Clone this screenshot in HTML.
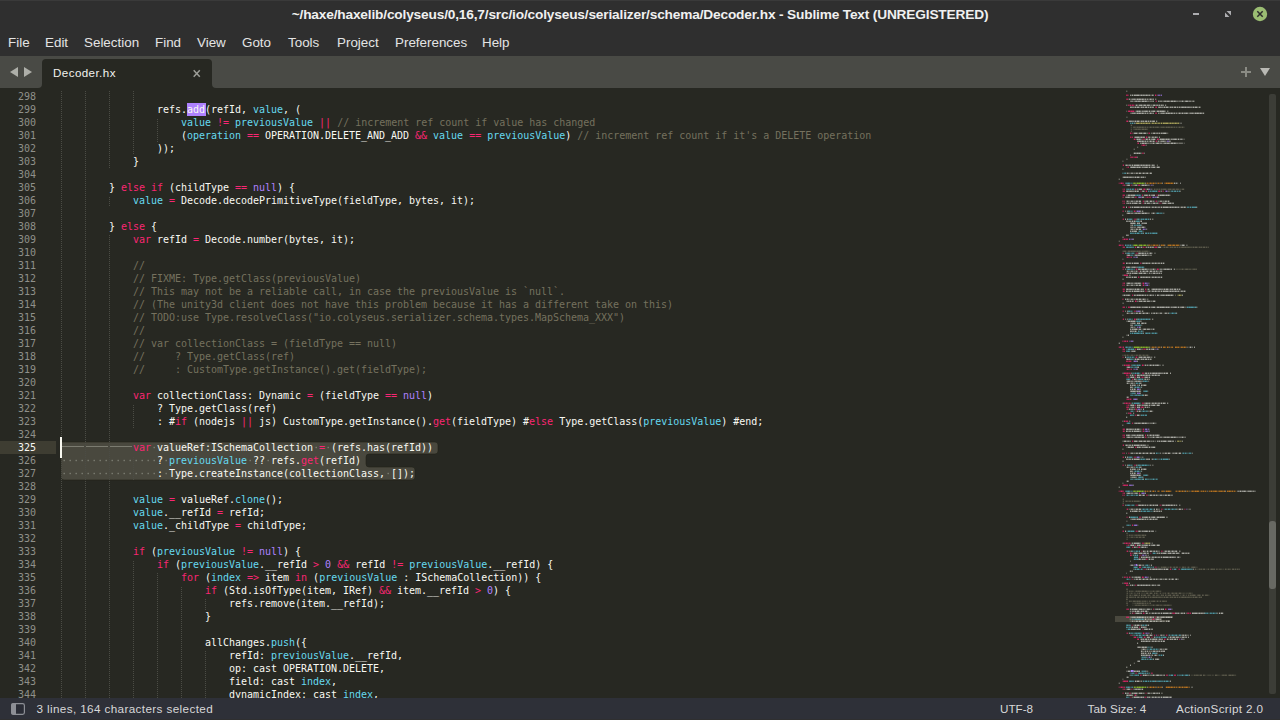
<!DOCTYPE html>
<html lang="en">
<head>
<meta charset="utf-8">
<title>Decoder.hx - Sublime Text (UNREGISTERED)</title>
<style>
html,body{margin:0;padding:0;background:#272822;}
body{width:1280px;height:720px;position:relative;overflow:hidden;font-family:"Liberation Sans","DejaVu Sans",sans-serif;}
#titlebar{position:absolute;left:0;top:0;width:1280px;height:56px;background:#2f2f2f;}
#topedge{position:absolute;left:0;top:0;width:1280px;height:1px;background:#3a3a3a;}
#title{position:absolute;left:0;top:6px;width:1280px;text-align:center;font-weight:bold;font-size:13.7px;letter-spacing:-0.17px;line-height:18px;color:#f0f0f0;white-space:pre;}
.menu{position:absolute;top:34px;font-size:13.4px;line-height:18px;color:#e4e4e4;white-space:pre;}
#tabbar{position:absolute;left:0;top:56px;width:1280px;height:32px;background:#494a45;}
#tab{position:absolute;left:42px;top:59px;width:170px;height:29px;background:#272822;border-radius:4px 4px 0 0;}
#tabname{position:absolute;left:53px;top:64px;font-size:11.6px;letter-spacing:0.42px;line-height:18px;color:#f2f2ee;white-space:pre;}
#editor{position:absolute;left:0;top:88px;width:1280px;height:610px;background:#272822;overflow:hidden;}
#status{position:absolute;left:0;top:698px;width:1280px;height:22px;background:#2e3038;}
.st{position:absolute;top:700px;font-size:11.7px;letter-spacing:0.34px;line-height:18px;color:#d8d8d8;white-space:pre;}
.ln,.cl{position:absolute;font-family:"DejaVu Sans Mono","Liberation Mono",monospace;font-size:10px;line-height:13px;height:13px;white-space:pre;}
.ln{left:0;width:36px;text-align:right;color:#8f908a;}
.ln.cur{color:#f8f8f2;}
.cl{color:#f8f8f2;letter-spacing:-0.02px;}
.k{color:#f92672}.b{color:#66d9ef}.p{color:#ae81ff}.c{color:#75715e}
.hl{color:#f8f8f2}
.g{position:absolute;width:1px;top:91px;height:607px;background-image:linear-gradient(to bottom,#4a4b44 50%,transparent 50%);background-size:1px 2px;}
svg{position:absolute;left:0;top:0;}
</style>
</head>
<body>
<div id="titlebar"></div>
<div id="topedge"></div>
<div id="title">~/haxe/haxelib/colyseus/0,16,7/src/io/colyseus/serializer/schema/Decoder.hx - Sublime Text (UNREGISTERED)</div>
<div class="menu" style="left:8px">File</div>
<div class="menu" style="left:45px">Edit</div>
<div class="menu" style="left:84px">Selection</div>
<div class="menu" style="left:155px">Find</div>
<div class="menu" style="left:197px">View</div>
<div class="menu" style="left:242px">Goto</div>
<div class="menu" style="left:288px">Tools</div>
<div class="menu" style="left:337px">Project</div>
<div class="menu" style="left:395px">Preferences</div>
<div class="menu" style="left:482px">Help</div>
<div id="tabbar"></div>
<div id="tab"></div>
<div id="tabname">Decoder.hx</div>
<div id="editor"></div>
<div id="gutterhl" style="position:absolute;left:0;top:441px;width:56px;height:13px;background:#3e3d32"></div>
<div style="position:absolute;left:187px;top:103px;width:19px;height:13px;background:#ae81ff"></div>
<svg width="1280" height="720" viewBox="0 0 1280 720">
<!-- selection -->
<path d="M61 442 H435 Q438 442 438 445 V451 Q438 454 435 454 H369 Q366 454 366 457 V464 Q366 467 369 467 H412 Q415 467 415 470 V477 Q415 480 412 480 H64 Q61 480 61 477 Z" fill="#49483e" stroke="#222319" stroke-opacity="0.6" stroke-width="1"/>
<!-- tab markers line 325 -->
<g stroke="#7b7b70" stroke-width="1" shape-rendering="crispEdges">
<line x1="62" y1="446.5" x2="84" y2="446.5"/><line x1="86" y1="446.5" x2="108" y2="446.5"/><line x1="110" y1="446.5" x2="132" y2="446.5"/>
</g>
<g fill="#7d7e73" id="spdots"><rect x="153.5" y="446.8" width="1.4" height="1.4"/><rect x="315.5" y="446.8" width="1.4" height="1.4"/><rect x="327.5" y="446.8" width="1.4" height="1.4"/><rect x="63.5" y="459.8" width="1.4" height="1.4"/><rect x="69.5" y="459.8" width="1.4" height="1.4"/><rect x="75.5" y="459.8" width="1.4" height="1.4"/><rect x="81.5" y="459.8" width="1.4" height="1.4"/><rect x="87.5" y="459.8" width="1.4" height="1.4"/><rect x="93.5" y="459.8" width="1.4" height="1.4"/><rect x="99.5" y="459.8" width="1.4" height="1.4"/><rect x="105.5" y="459.8" width="1.4" height="1.4"/><rect x="111.5" y="459.8" width="1.4" height="1.4"/><rect x="117.5" y="459.8" width="1.4" height="1.4"/><rect x="123.5" y="459.8" width="1.4" height="1.4"/><rect x="129.5" y="459.8" width="1.4" height="1.4"/><rect x="135.5" y="459.8" width="1.4" height="1.4"/><rect x="141.5" y="459.8" width="1.4" height="1.4"/><rect x="147.5" y="459.8" width="1.4" height="1.4"/><rect x="153.5" y="459.8" width="1.4" height="1.4"/><rect x="165.5" y="459.8" width="1.4" height="1.4"/><rect x="249.5" y="459.8" width="1.4" height="1.4"/><rect x="267.5" y="459.8" width="1.4" height="1.4"/><rect x="63.5" y="472.8" width="1.4" height="1.4"/><rect x="69.5" y="472.8" width="1.4" height="1.4"/><rect x="75.5" y="472.8" width="1.4" height="1.4"/><rect x="81.5" y="472.8" width="1.4" height="1.4"/><rect x="87.5" y="472.8" width="1.4" height="1.4"/><rect x="93.5" y="472.8" width="1.4" height="1.4"/><rect x="99.5" y="472.8" width="1.4" height="1.4"/><rect x="105.5" y="472.8" width="1.4" height="1.4"/><rect x="111.5" y="472.8" width="1.4" height="1.4"/><rect x="117.5" y="472.8" width="1.4" height="1.4"/><rect x="123.5" y="472.8" width="1.4" height="1.4"/><rect x="129.5" y="472.8" width="1.4" height="1.4"/><rect x="135.5" y="472.8" width="1.4" height="1.4"/><rect x="141.5" y="472.8" width="1.4" height="1.4"/><rect x="147.5" y="472.8" width="1.4" height="1.4"/><rect x="153.5" y="472.8" width="1.4" height="1.4"/><rect x="165.5" y="472.8" width="1.4" height="1.4"/><rect x="387.5" y="472.8" width="1.4" height="1.4"/></g>
</svg>
<svg width="1280" height="720" viewBox="0 0 1280 720" shape-rendering="crispEdges"><g stroke="#4b4c45" stroke-width="1" stroke-dasharray="1 1"><line x1="61.5" y1="91" x2="61.5" y2="698"/><line x1="85.5" y1="91" x2="85.5" y2="698"/><line x1="109.5" y1="91" x2="109.5" y2="168"/><line x1="109.5" y1="197" x2="109.5" y2="207"/><line x1="109.5" y1="235" x2="109.5" y2="698"/><line x1="133.5" y1="91" x2="133.5" y2="155"/><line x1="133.5" y1="405" x2="133.5" y2="428"/><line x1="133.5" y1="457" x2="133.5" y2="480"/><line x1="133.5" y1="561" x2="133.5" y2="698"/><line x1="157.5" y1="119" x2="157.5" y2="142"/><line x1="157.5" y1="573" x2="157.5" y2="698"/><line x1="181.5" y1="587" x2="181.5" y2="698"/><line x1="205.5" y1="599" x2="205.5" y2="610"/><line x1="205.5" y1="651" x2="205.5" y2="698"/></g></svg><div class="ln" style="top:90px">298</div>
<div class="ln" style="top:103px">299</div>
<div class="ln" style="top:116px">300</div>
<div class="ln" style="top:129px">301</div>
<div class="ln" style="top:142px">302</div>
<div class="ln" style="top:155px">303</div>
<div class="ln" style="top:168px">304</div>
<div class="ln" style="top:181px">305</div>
<div class="ln" style="top:194px">306</div>
<div class="ln" style="top:207px">307</div>
<div class="ln" style="top:220px">308</div>
<div class="ln" style="top:233px">309</div>
<div class="ln" style="top:246px">310</div>
<div class="ln" style="top:259px">311</div>
<div class="ln" style="top:272px">312</div>
<div class="ln" style="top:285px">313</div>
<div class="ln" style="top:298px">314</div>
<div class="ln" style="top:311px">315</div>
<div class="ln" style="top:324px">316</div>
<div class="ln" style="top:337px">317</div>
<div class="ln" style="top:350px">318</div>
<div class="ln" style="top:363px">319</div>
<div class="ln" style="top:376px">320</div>
<div class="ln" style="top:389px">321</div>
<div class="ln" style="top:402px">322</div>
<div class="ln" style="top:415px">323</div>
<div class="ln" style="top:428px">324</div>
<div class="ln cur" style="top:441px">325</div>
<div class="ln" style="top:454px">326</div>
<div class="ln" style="top:467px">327</div>
<div class="ln" style="top:480px">328</div>
<div class="ln" style="top:493px">329</div>
<div class="ln" style="top:506px">330</div>
<div class="ln" style="top:519px">331</div>
<div class="ln" style="top:532px">332</div>
<div class="ln" style="top:545px">333</div>
<div class="ln" style="top:558px">334</div>
<div class="ln" style="top:571px">335</div>
<div class="ln" style="top:584px">336</div>
<div class="ln" style="top:597px">337</div>
<div class="ln" style="top:610px">338</div>
<div class="ln" style="top:623px">339</div>
<div class="ln" style="top:636px">340</div>
<div class="ln" style="top:649px">341</div>
<div class="ln" style="top:662px">342</div>
<div class="ln" style="top:675px">343</div>
<div class="ln" style="top:688px">344</div>
<div class="cl" style="top:103px;left:157px">refs.<span class="hl">add</span>(refId, <span class="b">value</span>, (</div>
<div class="cl" style="top:116px;left:181px"><span class="b">value</span> <span class="k">!=</span> <span class="b">previousValue</span> <span class="k">||</span> <span class="c">// increment ref count if value has changed</span></div>
<div class="cl" style="top:129px;left:181px">(<span class="b">operation</span> <span class="k">==</span> OPERATION.DELETE_AND_ADD <span class="k">&amp;&amp;</span> <span class="b">value</span> <span class="k">==</span> <span class="b">previousValue</span>) <span class="c">// increment ref count if it's a DELETE operation</span></div>
<div class="cl" style="top:142px;left:157px">));</div>
<div class="cl" style="top:155px;left:133px">}</div>
<div class="cl" style="top:181px;left:109px">} <span class="k">else if</span> (childType <span class="k">==</span> <span class="p">null</span>) {</div>
<div class="cl" style="top:194px;left:133px"><span class="b">value</span> <span class="k">=</span> Decode.decodePrimitiveType(fieldType, bytes, it);</div>
<div class="cl" style="top:220px;left:109px">} <span class="k">else</span> {</div>
<div class="cl" style="top:233px;left:133px"><span class="k">var</span> refId <span class="k">=</span> Decode.number(bytes, it);</div>
<div class="cl" style="top:259px;left:133px"><span class="c">//</span></div>
<div class="cl" style="top:272px;left:133px"><span class="c">// FIXME: Type.getClass(previousValue)</span></div>
<div class="cl" style="top:285px;left:133px"><span class="c">// This may not be a reliable call, in case the previousValue is `null`.</span></div>
<div class="cl" style="top:298px;left:133px"><span class="c">// (The unity3d client does not have this problem because it has a different take on this)</span></div>
<div class="cl" style="top:311px;left:133px"><span class="c">// TODO:use Type.resolveClass("io.colyseus.serializer.schema.types.MapSchema_XXX")</span></div>
<div class="cl" style="top:324px;left:133px"><span class="c">//</span></div>
<div class="cl" style="top:337px;left:133px"><span class="c">// var collectionClass = (fieldType == null)</span></div>
<div class="cl" style="top:350px;left:133px"><span class="c">//     ? Type.getClass(ref)</span></div>
<div class="cl" style="top:363px;left:133px"><span class="c">//     : CustomType.getInstance().get(fieldType);</span></div>
<div class="cl" style="top:389px;left:133px"><span class="k">var</span> collectionClass: Dynamic <span class="k">=</span> (fieldType <span class="k">==</span> <span class="p">null</span>)</div>
<div class="cl" style="top:402px;left:157px">? Type.getClass(ref)</div>
<div class="cl" style="top:415px;left:157px">: #<span class="k">if</span> (nodejs <span class="k">||</span> js) CustomType.getInstance().<span class="k">get</span>(fieldType) #<span class="k">else</span> Type.getClass(<span class="b">previousValue</span>) #end;</div>
<div class="cl" style="top:441px;left:133px"><span class="k">var</span> valueRef:ISchemaCollection <span class="k">=</span> (refs.has(refId))</div>
<div class="cl" style="top:454px;left:157px">? <span class="b">previousValue</span> ?? refs.<span class="k">get</span>(refId)</div>
<div class="cl" style="top:467px;left:157px">: Type.createInstance(collectionClass, []);</div>
<div class="cl" style="top:493px;left:133px"><span class="b">value</span> <span class="k">=</span> valueRef.<span class="b">clone</span>();</div>
<div class="cl" style="top:506px;left:133px"><span class="b">value</span>.__refId <span class="k">=</span> refId;</div>
<div class="cl" style="top:519px;left:133px"><span class="b">value</span>._childType <span class="k">=</span> childType;</div>
<div class="cl" style="top:545px;left:133px"><span class="k">if</span> (<span class="b">previousValue</span> <span class="k">!=</span> <span class="p">null</span>) {</div>
<div class="cl" style="top:558px;left:157px"><span class="k">if</span> (<span class="b">previousValue</span>.__refId <span class="k">&gt;</span> <span class="p">0</span> <span class="k">&amp;&amp;</span> refId <span class="k">!=</span> <span class="b">previousValue</span>.__refId) {</div>
<div class="cl" style="top:571px;left:181px"><span class="k">for</span> (<span class="b">index</span> <span class="k">=&gt;</span> item <span class="k">in</span> (<span class="b">previousValue</span> : ISchemaCollection)) {</div>
<div class="cl" style="top:584px;left:205px"><span class="k">if</span> (Std.isOfType(item, IRef) <span class="k">&amp;&amp;</span> item.__refId <span class="k">&gt;</span> <span class="p">0</span>) {</div>
<div class="cl" style="top:597px;left:229px">refs.remove(item.__refId);</div>
<div class="cl" style="top:610px;left:205px">}</div>
<div class="cl" style="top:636px;left:205px">allChanges.<span class="b">push</span>({</div>
<div class="cl" style="top:649px;left:229px">refId: <span class="b">previousValue</span>.__refId,</div>
<div class="cl" style="top:662px;left:229px">op: cast OPERATION.DELETE,</div>
<div class="cl" style="top:675px;left:229px">field: cast <span class="b">index</span>,</div>
<div class="cl" style="top:688px;left:229px">dynamicIndex: cast <span class="b">index</span>,</div><svg width="1280" height="720" viewBox="0 0 1280 720">
<rect x="1115" y="616" width="58" height="2" fill="#49483e"/><rect x="1115" y="618" width="47" height="2" fill="#49483e"/><rect x="1115" y="620" width="55" height="2" fill="#49483e"/>
<defs><pattern id="tx" x="1115" y="88" width="29" height="14" patternUnits="userSpaceOnUse"><rect x="0" y="0" width="1" height="2" fill="#b2b2b2"/><rect x="1" y="0" width="1" height="2" fill="#8c8c8c"/><rect x="2" y="0" width="1" height="2" fill="#cccccc"/><rect x="3" y="0" width="1" height="2" fill="#ffffff"/><rect x="4" y="0" width="1" height="2" fill="#666666"/><rect x="5" y="0" width="1" height="2" fill="#666666"/><rect x="6" y="0" width="1" height="2" fill="#ffffff"/><rect x="7" y="0" width="1" height="2" fill="#e6e6e6"/><rect x="8" y="0" width="1" height="2" fill="#666666"/><rect x="9" y="0" width="1" height="2" fill="#b2b2b2"/><rect x="10" y="0" width="1" height="2" fill="#e6e6e6"/><rect x="11" y="0" width="1" height="2" fill="#666666"/><rect x="12" y="0" width="1" height="2" fill="#e6e6e6"/><rect x="13" y="0" width="1" height="2" fill="#8c8c8c"/><rect x="14" y="0" width="1" height="2" fill="#666666"/><rect x="15" y="0" width="1" height="2" fill="#666666"/><rect x="16" y="0" width="1" height="2" fill="#cccccc"/><rect x="17" y="0" width="1" height="2" fill="#cccccc"/><rect x="18" y="0" width="1" height="2" fill="#666666"/><rect x="19" y="0" width="1" height="2" fill="#8c8c8c"/><rect x="20" y="0" width="1" height="2" fill="#666666"/><rect x="21" y="0" width="1" height="2" fill="#e6e6e6"/><rect x="22" y="0" width="1" height="2" fill="#cccccc"/><rect x="23" y="0" width="1" height="2" fill="#666666"/><rect x="24" y="0" width="1" height="2" fill="#ffffff"/><rect x="25" y="0" width="1" height="2" fill="#e6e6e6"/><rect x="26" y="0" width="1" height="2" fill="#666666"/><rect x="27" y="0" width="1" height="2" fill="#8c8c8c"/><rect x="28" y="0" width="1" height="2" fill="#ffffff"/><rect x="0" y="2" width="1" height="2" fill="#ffffff"/><rect x="1" y="2" width="1" height="2" fill="#e6e6e6"/><rect x="2" y="2" width="1" height="2" fill="#666666"/><rect x="3" y="2" width="1" height="2" fill="#e6e6e6"/><rect x="4" y="2" width="1" height="2" fill="#e6e6e6"/><rect x="5" y="2" width="1" height="2" fill="#cccccc"/><rect x="6" y="2" width="1" height="2" fill="#666666"/><rect x="7" y="2" width="1" height="2" fill="#8c8c8c"/><rect x="8" y="2" width="1" height="2" fill="#666666"/><rect x="9" y="2" width="1" height="2" fill="#e6e6e6"/><rect x="10" y="2" width="1" height="2" fill="#ffffff"/><rect x="11" y="2" width="1" height="2" fill="#8c8c8c"/><rect x="12" y="2" width="1" height="2" fill="#b2b2b2"/><rect x="13" y="2" width="1" height="2" fill="#cccccc"/><rect x="14" y="2" width="1" height="2" fill="#8c8c8c"/><rect x="15" y="2" width="1" height="2" fill="#e6e6e6"/><rect x="16" y="2" width="1" height="2" fill="#666666"/><rect x="17" y="2" width="1" height="2" fill="#e6e6e6"/><rect x="18" y="2" width="1" height="2" fill="#b2b2b2"/><rect x="19" y="2" width="1" height="2" fill="#e6e6e6"/><rect x="20" y="2" width="1" height="2" fill="#ffffff"/><rect x="21" y="2" width="1" height="2" fill="#ffffff"/><rect x="22" y="2" width="1" height="2" fill="#8c8c8c"/><rect x="23" y="2" width="1" height="2" fill="#666666"/><rect x="24" y="2" width="1" height="2" fill="#e6e6e6"/><rect x="25" y="2" width="1" height="2" fill="#e6e6e6"/><rect x="26" y="2" width="1" height="2" fill="#ffffff"/><rect x="27" y="2" width="1" height="2" fill="#8c8c8c"/><rect x="28" y="2" width="1" height="2" fill="#b2b2b2"/><rect x="0" y="4" width="1" height="2" fill="#666666"/><rect x="1" y="4" width="1" height="2" fill="#e6e6e6"/><rect x="2" y="4" width="1" height="2" fill="#ffffff"/><rect x="3" y="4" width="1" height="2" fill="#666666"/><rect x="4" y="4" width="1" height="2" fill="#e6e6e6"/><rect x="5" y="4" width="1" height="2" fill="#666666"/><rect x="6" y="4" width="1" height="2" fill="#e6e6e6"/><rect x="7" y="4" width="1" height="2" fill="#8c8c8c"/><rect x="8" y="4" width="1" height="2" fill="#cccccc"/><rect x="9" y="4" width="1" height="2" fill="#ffffff"/><rect x="10" y="4" width="1" height="2" fill="#e6e6e6"/><rect x="11" y="4" width="1" height="2" fill="#cccccc"/><rect x="12" y="4" width="1" height="2" fill="#ffffff"/><rect x="13" y="4" width="1" height="2" fill="#b2b2b2"/><rect x="14" y="4" width="1" height="2" fill="#cccccc"/><rect x="15" y="4" width="1" height="2" fill="#e6e6e6"/><rect x="16" y="4" width="1" height="2" fill="#cccccc"/><rect x="17" y="4" width="1" height="2" fill="#b2b2b2"/><rect x="18" y="4" width="1" height="2" fill="#b2b2b2"/><rect x="19" y="4" width="1" height="2" fill="#8c8c8c"/><rect x="20" y="4" width="1" height="2" fill="#ffffff"/><rect x="21" y="4" width="1" height="2" fill="#8c8c8c"/><rect x="22" y="4" width="1" height="2" fill="#ffffff"/><rect x="23" y="4" width="1" height="2" fill="#ffffff"/><rect x="24" y="4" width="1" height="2" fill="#8c8c8c"/><rect x="25" y="4" width="1" height="2" fill="#666666"/><rect x="26" y="4" width="1" height="2" fill="#e6e6e6"/><rect x="27" y="4" width="1" height="2" fill="#b2b2b2"/><rect x="28" y="4" width="1" height="2" fill="#e6e6e6"/><rect x="0" y="6" width="1" height="2" fill="#cccccc"/><rect x="1" y="6" width="1" height="2" fill="#b2b2b2"/><rect x="2" y="6" width="1" height="2" fill="#ffffff"/><rect x="3" y="6" width="1" height="2" fill="#cccccc"/><rect x="4" y="6" width="1" height="2" fill="#b2b2b2"/><rect x="5" y="6" width="1" height="2" fill="#e6e6e6"/><rect x="6" y="6" width="1" height="2" fill="#666666"/><rect x="7" y="6" width="1" height="2" fill="#666666"/><rect x="8" y="6" width="1" height="2" fill="#e6e6e6"/><rect x="9" y="6" width="1" height="2" fill="#cccccc"/><rect x="10" y="6" width="1" height="2" fill="#8c8c8c"/><rect x="11" y="6" width="1" height="2" fill="#ffffff"/><rect x="12" y="6" width="1" height="2" fill="#b2b2b2"/><rect x="13" y="6" width="1" height="2" fill="#8c8c8c"/><rect x="14" y="6" width="1" height="2" fill="#cccccc"/><rect x="15" y="6" width="1" height="2" fill="#cccccc"/><rect x="16" y="6" width="1" height="2" fill="#666666"/><rect x="17" y="6" width="1" height="2" fill="#ffffff"/><rect x="18" y="6" width="1" height="2" fill="#666666"/><rect x="19" y="6" width="1" height="2" fill="#ffffff"/><rect x="20" y="6" width="1" height="2" fill="#e6e6e6"/><rect x="21" y="6" width="1" height="2" fill="#e6e6e6"/><rect x="22" y="6" width="1" height="2" fill="#ffffff"/><rect x="23" y="6" width="1" height="2" fill="#ffffff"/><rect x="24" y="6" width="1" height="2" fill="#b2b2b2"/><rect x="25" y="6" width="1" height="2" fill="#b2b2b2"/><rect x="26" y="6" width="1" height="2" fill="#ffffff"/><rect x="27" y="6" width="1" height="2" fill="#b2b2b2"/><rect x="28" y="6" width="1" height="2" fill="#e6e6e6"/><rect x="0" y="8" width="1" height="2" fill="#cccccc"/><rect x="1" y="8" width="1" height="2" fill="#e6e6e6"/><rect x="2" y="8" width="1" height="2" fill="#ffffff"/><rect x="3" y="8" width="1" height="2" fill="#cccccc"/><rect x="4" y="8" width="1" height="2" fill="#666666"/><rect x="5" y="8" width="1" height="2" fill="#ffffff"/><rect x="6" y="8" width="1" height="2" fill="#666666"/><rect x="7" y="8" width="1" height="2" fill="#b2b2b2"/><rect x="8" y="8" width="1" height="2" fill="#cccccc"/><rect x="9" y="8" width="1" height="2" fill="#ffffff"/><rect x="10" y="8" width="1" height="2" fill="#ffffff"/><rect x="11" y="8" width="1" height="2" fill="#666666"/><rect x="12" y="8" width="1" height="2" fill="#666666"/><rect x="13" y="8" width="1" height="2" fill="#ffffff"/><rect x="14" y="8" width="1" height="2" fill="#ffffff"/><rect x="15" y="8" width="1" height="2" fill="#b2b2b2"/><rect x="16" y="8" width="1" height="2" fill="#ffffff"/><rect x="17" y="8" width="1" height="2" fill="#e6e6e6"/><rect x="18" y="8" width="1" height="2" fill="#ffffff"/><rect x="19" y="8" width="1" height="2" fill="#ffffff"/><rect x="20" y="8" width="1" height="2" fill="#cccccc"/><rect x="21" y="8" width="1" height="2" fill="#b2b2b2"/><rect x="22" y="8" width="1" height="2" fill="#ffffff"/><rect x="23" y="8" width="1" height="2" fill="#cccccc"/><rect x="24" y="8" width="1" height="2" fill="#ffffff"/><rect x="25" y="8" width="1" height="2" fill="#b2b2b2"/><rect x="26" y="8" width="1" height="2" fill="#666666"/><rect x="27" y="8" width="1" height="2" fill="#cccccc"/><rect x="28" y="8" width="1" height="2" fill="#b2b2b2"/><rect x="0" y="10" width="1" height="2" fill="#8c8c8c"/><rect x="1" y="10" width="1" height="2" fill="#e6e6e6"/><rect x="2" y="10" width="1" height="2" fill="#666666"/><rect x="3" y="10" width="1" height="2" fill="#cccccc"/><rect x="4" y="10" width="1" height="2" fill="#666666"/><rect x="5" y="10" width="1" height="2" fill="#8c8c8c"/><rect x="6" y="10" width="1" height="2" fill="#ffffff"/><rect x="7" y="10" width="1" height="2" fill="#b2b2b2"/><rect x="8" y="10" width="1" height="2" fill="#8c8c8c"/><rect x="9" y="10" width="1" height="2" fill="#ffffff"/><rect x="10" y="10" width="1" height="2" fill="#8c8c8c"/><rect x="11" y="10" width="1" height="2" fill="#cccccc"/><rect x="12" y="10" width="1" height="2" fill="#cccccc"/><rect x="13" y="10" width="1" height="2" fill="#ffffff"/><rect x="14" y="10" width="1" height="2" fill="#cccccc"/><rect x="15" y="10" width="1" height="2" fill="#666666"/><rect x="16" y="10" width="1" height="2" fill="#8c8c8c"/><rect x="17" y="10" width="1" height="2" fill="#cccccc"/><rect x="18" y="10" width="1" height="2" fill="#cccccc"/><rect x="19" y="10" width="1" height="2" fill="#e6e6e6"/><rect x="20" y="10" width="1" height="2" fill="#b2b2b2"/><rect x="21" y="10" width="1" height="2" fill="#8c8c8c"/><rect x="22" y="10" width="1" height="2" fill="#ffffff"/><rect x="23" y="10" width="1" height="2" fill="#cccccc"/><rect x="24" y="10" width="1" height="2" fill="#ffffff"/><rect x="25" y="10" width="1" height="2" fill="#e6e6e6"/><rect x="26" y="10" width="1" height="2" fill="#b2b2b2"/><rect x="27" y="10" width="1" height="2" fill="#ffffff"/><rect x="28" y="10" width="1" height="2" fill="#cccccc"/><rect x="0" y="12" width="1" height="2" fill="#b2b2b2"/><rect x="1" y="12" width="1" height="2" fill="#ffffff"/><rect x="2" y="12" width="1" height="2" fill="#cccccc"/><rect x="3" y="12" width="1" height="2" fill="#8c8c8c"/><rect x="4" y="12" width="1" height="2" fill="#8c8c8c"/><rect x="5" y="12" width="1" height="2" fill="#666666"/><rect x="6" y="12" width="1" height="2" fill="#8c8c8c"/><rect x="7" y="12" width="1" height="2" fill="#8c8c8c"/><rect x="8" y="12" width="1" height="2" fill="#8c8c8c"/><rect x="9" y="12" width="1" height="2" fill="#ffffff"/><rect x="10" y="12" width="1" height="2" fill="#8c8c8c"/><rect x="11" y="12" width="1" height="2" fill="#666666"/><rect x="12" y="12" width="1" height="2" fill="#cccccc"/><rect x="13" y="12" width="1" height="2" fill="#ffffff"/><rect x="14" y="12" width="1" height="2" fill="#e6e6e6"/><rect x="15" y="12" width="1" height="2" fill="#8c8c8c"/><rect x="16" y="12" width="1" height="2" fill="#b2b2b2"/><rect x="17" y="12" width="1" height="2" fill="#b2b2b2"/><rect x="18" y="12" width="1" height="2" fill="#666666"/><rect x="19" y="12" width="1" height="2" fill="#8c8c8c"/><rect x="20" y="12" width="1" height="2" fill="#cccccc"/><rect x="21" y="12" width="1" height="2" fill="#e6e6e6"/><rect x="22" y="12" width="1" height="2" fill="#b2b2b2"/><rect x="23" y="12" width="1" height="2" fill="#e6e6e6"/><rect x="24" y="12" width="1" height="2" fill="#e6e6e6"/><rect x="25" y="12" width="1" height="2" fill="#b2b2b2"/><rect x="26" y="12" width="1" height="2" fill="#8c8c8c"/><rect x="27" y="12" width="1" height="2" fill="#ffffff"/><rect x="28" y="12" width="1" height="2" fill="#ffffff"/></pattern><mask id="mk" maskUnits="userSpaceOnUse" x="1100" y="88" width="180" height="612"><rect x="1100" y="88" width="180" height="612" fill="url(#tx)"/></mask></defs>
<g mask="url(#mk)">
<g fill="#f8f8f2" fill-opacity="0.62">
<rect x="1126.25" y="90.55" width="1.0" height="1.45"/>
<rect x="1130.0" y="94.55" width="23.75" height="1.45"/>
<rect x="1128.75" y="98.55" width="25.0" height="1.45"/>
<rect x="1155.25" y="98.55" width="1.0" height="1.45"/>
<rect x="1130.0" y="100.55" width="23.75" height="1.45"/>
<rect x="1158.12" y="100.55" width="36.25" height="1.45"/>
<rect x="1126.25" y="104.55" width="1.0" height="1.45"/>
<rect x="1135.62" y="104.55" width="28.12" height="1.45"/>
<rect x="1165.25" y="104.55" width="1.0" height="1.45"/>
<rect x="1130.0" y="106.55" width="23.75" height="1.45"/>
<rect x="1158.12" y="106.55" width="42.5" height="1.45"/>
<rect x="1126.25" y="110.55" width="1.0" height="1.45"/>
<rect x="1135.62" y="110.55" width="30.0" height="1.45"/>
<rect x="1167.25" y="110.55" width="1.0" height="1.45"/>
<rect x="1130.0" y="112.55" width="23.75" height="1.45"/>
<rect x="1158.12" y="112.55" width="46.25" height="1.45"/>
<rect x="1126.25" y="116.55" width="1.0" height="1.45"/>
<rect x="1128.75" y="120.55" width="26.25" height="1.45"/>
<rect x="1156.25" y="120.55" width="1.0" height="1.45"/>
<rect x="1134.5" y="122.55" width="1.0" height="1.45"/>
<rect x="1179.5" y="122.55" width="2.0" height="1.45"/>
<rect x="1133.5" y="132.55" width="14.0" height="1.45"/>
<rect x="1150.75" y="132.55" width="17.38" height="1.45"/>
<rect x="1134.5" y="136.55" width="10.5" height="1.45"/>
<rect x="1148.0" y="136.55" width="10.12" height="1.45"/>
<rect x="1159.0" y="136.55" width="1.0" height="1.45"/>
<rect x="1136.25" y="138.55" width="6.0" height="1.45"/>
<rect x="1145.5" y="138.55" width="10.75" height="1.45"/>
<rect x="1159.38" y="138.55" width="23.12" height="1.45"/>
<rect x="1183.75" y="138.55" width="1.0" height="1.45"/>
<rect x="1137.25" y="140.55" width="17.75" height="1.45"/>
<rect x="1157.75" y="140.55" width="8.5" height="1.45"/>
<rect x="1169.25" y="140.55" width="1.5" height="1.45"/>
<rect x="1140.0" y="142.55" width="42.5" height="1.45"/>
<rect x="1183.75" y="142.55" width="1.0" height="1.45"/>
<rect x="1145.75" y="144.55" width="0.75" height="1.45"/>
<rect x="1137.25" y="146.55" width="1.0" height="1.45"/>
<rect x="1133.75" y="148.55" width="1.0" height="1.45"/>
<rect x="1133.75" y="152.55" width="8.12" height="1.45"/>
<rect x="1143.88" y="152.55" width="0.75" height="1.45"/>
<rect x="1130.0" y="154.55" width="1.0" height="1.45"/>
<rect x="1137.0" y="156.55" width="0.75" height="1.45"/>
<rect x="1126.25" y="158.55" width="1.0" height="1.45"/>
<rect x="1122.5" y="160.55" width="1.0" height="1.45"/>
<rect x="1125.0" y="164.55" width="30.0" height="1.45"/>
<rect x="1156.88" y="164.55" width="1.0" height="1.45"/>
<rect x="1130.0" y="166.55" width="30.0" height="1.45"/>
<rect x="1122.5" y="168.55" width="1.0" height="1.45"/>
<rect x="1126.38" y="172.55" width="25.5" height="1.45"/>
<rect x="1122.5" y="176.55" width="23.12" height="1.45"/>
<rect x="1118.75" y="178.55" width="1.0" height="1.45"/>
<rect x="1145.12" y="182.55" width="0.75" height="1.45"/>
<rect x="1155.75" y="182.55" width="0.75" height="1.45"/>
<rect x="1162.0" y="182.55" width="0.75" height="1.45"/>
<rect x="1174.0" y="182.55" width="4.12" height="1.45"/>
<rect x="1180.0" y="182.55" width="1.0" height="1.45"/>
<rect x="1125.62" y="184.55" width="4.38" height="1.45"/>
<rect x="1132.5" y="184.55" width="5.0" height="1.45"/>
<rect x="1140.62" y="184.55" width="9.38" height="1.45"/>
<rect x="1152.62" y="184.55" width="0.75" height="1.45"/>
<rect x="1136.88" y="188.55" width="5.0" height="1.45"/>
<rect x="1145.75" y="188.55" width="3.0" height="1.45"/>
<rect x="1151.25" y="188.55" width="1.25" height="1.45"/>
<rect x="1126.0" y="190.55" width="12.75" height="1.45"/>
<rect x="1141.88" y="190.55" width="3.12" height="1.45"/>
<rect x="1160.62" y="190.55" width="1.25" height="1.45"/>
<rect x="1168.12" y="190.55" width="1.88" height="1.45"/>
<rect x="1180.12" y="190.55" width="0.88" height="1.45"/>
<rect x="1126.0" y="194.55" width="9.0" height="1.45"/>
<rect x="1143.75" y="194.55" width="11.25" height="1.45"/>
<rect x="1158.12" y="194.55" width="12.5" height="1.45"/>
<rect x="1125.0" y="196.55" width="9.38" height="1.45"/>
<rect x="1142.12" y="196.55" width="2.25" height="1.45"/>
<rect x="1157.0" y="196.55" width="2.38" height="1.45"/>
<rect x="1126.0" y="200.55" width="15.25" height="1.45"/>
<rect x="1144.38" y="200.55" width="10.0" height="1.45"/>
<rect x="1157.5" y="200.55" width="11.88" height="1.45"/>
<rect x="1126.0" y="202.55" width="15.25" height="1.45"/>
<rect x="1144.38" y="202.55" width="14.38" height="1.45"/>
<rect x="1161.88" y="202.55" width="11.88" height="1.45"/>
<rect x="1126.0" y="206.55" width="1.0" height="1.45"/>
<rect x="1130.0" y="206.55" width="56.25" height="1.45"/>
<rect x="1196.38" y="206.55" width="0.88" height="1.45"/>
<rect x="1125.0" y="210.55" width="1.0" height="1.45"/>
<rect x="1126.88" y="210.55" width="1.0" height="1.45"/>
<rect x="1140.25" y="210.55" width="1.0" height="1.45"/>
<rect x="1142.25" y="210.55" width="1.0" height="1.45"/>
<rect x="1126.25" y="212.55" width="23.75" height="1.45"/>
<rect x="1151.25" y="212.55" width="4.38" height="1.45"/>
<rect x="1163.25" y="212.55" width="1.0" height="1.45"/>
<rect x="1122.5" y="214.55" width="1.0" height="1.45"/>
<rect x="1125.0" y="218.55" width="1.0" height="1.45"/>
<rect x="1126.88" y="218.55" width="1.0" height="1.45"/>
<rect x="1136.25" y="218.55" width="1.25" height="1.45"/>
<rect x="1150.12" y="218.55" width="1.0" height="1.45"/>
<rect x="1152.25" y="218.55" width="1.0" height="1.45"/>
<rect x="1126.25" y="220.55" width="9.38" height="1.45"/>
<rect x="1140.12" y="220.55" width="1.88" height="1.45"/>
<rect x="1130.0" y="222.55" width="5.62" height="1.45"/>
<rect x="1136.88" y="222.55" width="3.12" height="1.45"/>
<rect x="1141.0" y="222.55" width="5.88" height="1.45"/>
<rect x="1130.0" y="224.55" width="3.12" height="1.45"/>
<rect x="1141.38" y="224.55" width="0.75" height="1.45"/>
<rect x="1130.0" y="226.55" width="5.62" height="1.45"/>
<rect x="1136.88" y="226.55" width="7.5" height="1.45"/>
<rect x="1144.5" y="226.55" width="0.75" height="1.45"/>
<rect x="1130.0" y="228.55" width="11.25" height="1.45"/>
<rect x="1146.38" y="228.55" width="0.75" height="1.45"/>
<rect x="1130.0" y="230.55" width="6.88" height="1.45"/>
<rect x="1142.62" y="230.55" width="0.75" height="1.45"/>
<rect x="1143.25" y="232.55" width="0.75" height="1.45"/>
<rect x="1126.25" y="234.55" width="2.75" height="1.45"/>
<rect x="1122.5" y="236.55" width="1.0" height="1.45"/>
<rect x="1133.25" y="238.55" width="0.75" height="1.45"/>
<rect x="1118.75" y="240.55" width="1.0" height="1.45"/>
<rect x="1147.62" y="244.55" width="0.75" height="1.45"/>
<rect x="1158.88" y="244.55" width="0.75" height="1.45"/>
<rect x="1164.5" y="244.55" width="0.75" height="1.45"/>
<rect x="1180.25" y="244.55" width="4.75" height="1.45"/>
<rect x="1186.5" y="244.55" width="1.0" height="1.45"/>
<rect x="1136.88" y="246.55" width="5.62" height="1.45"/>
<rect x="1146.25" y="246.55" width="7.5" height="1.45"/>
<rect x="1157.5" y="246.55" width="3.75" height="1.45"/>
<rect x="1125.0" y="252.55" width="1.0" height="1.45"/>
<rect x="1138.12" y="252.55" width="14.38" height="1.45"/>
<rect x="1154.38" y="252.55" width="1.0" height="1.45"/>
<rect x="1126.25" y="254.55" width="3.75" height="1.45"/>
<rect x="1134.38" y="254.55" width="17.5" height="1.45"/>
<rect x="1137.0" y="256.55" width="0.75" height="1.45"/>
<rect x="1122.5" y="258.55" width="1.0" height="1.45"/>
<rect x="1126.0" y="262.55" width="12.75" height="1.45"/>
<rect x="1141.88" y="262.55" width="22.5" height="1.45"/>
<rect x="1126.0" y="266.55" width="11.5" height="1.45"/>
<rect x="1125.0" y="268.55" width="1.0" height="1.45"/>
<rect x="1138.12" y="268.55" width="18.12" height="1.45"/>
<rect x="1159.38" y="268.55" width="12.5" height="1.45"/>
<rect x="1173.75" y="268.55" width="1.0" height="1.45"/>
<rect x="1126.25" y="270.55" width="11.25" height="1.45"/>
<rect x="1140.0" y="270.55" width="22.5" height="1.45"/>
<rect x="1126.25" y="272.55" width="21.25" height="1.45"/>
<rect x="1148.75" y="272.55" width="13.12" height="1.45"/>
<rect x="1122.5" y="274.55" width="1.0" height="1.45"/>
<rect x="1129.38" y="274.55" width="1.0" height="1.45"/>
<rect x="1126.25" y="276.55" width="10.62" height="1.45"/>
<rect x="1140.0" y="276.55" width="22.5" height="1.45"/>
<rect x="1122.5" y="278.55" width="1.0" height="1.45"/>
<rect x="1126.0" y="282.55" width="15.25" height="1.45"/>
<rect x="1148.88" y="282.55" width="0.75" height="1.45"/>
<rect x="1126.0" y="284.55" width="15.25" height="1.45"/>
<rect x="1148.88" y="284.55" width="0.75" height="1.45"/>
<rect x="1126.0" y="288.55" width="17.75" height="1.45"/>
<rect x="1146.88" y="288.55" width="3.12" height="1.45"/>
<rect x="1151.25" y="288.55" width="29.38" height="1.45"/>
<rect x="1126.0" y="290.55" width="18.38" height="1.45"/>
<rect x="1147.5" y="290.55" width="38.12" height="1.45"/>
<rect x="1122.5" y="294.55" width="8.12" height="1.45"/>
<rect x="1133.75" y="294.55" width="20.0" height="1.45"/>
<rect x="1154.75" y="294.55" width="1.0" height="1.45"/>
<rect x="1156.88" y="294.55" width="16.88" height="1.45"/>
<rect x="1175.0" y="294.55" width="1.0" height="1.45"/>
<rect x="1182.0" y="294.55" width="0.75" height="1.45"/>
<rect x="1125.0" y="298.55" width="21.25" height="1.45"/>
<rect x="1147.5" y="298.55" width="1.0" height="1.45"/>
<rect x="1126.25" y="300.55" width="7.5" height="1.45"/>
<rect x="1136.88" y="300.55" width="18.75" height="1.45"/>
<rect x="1122.5" y="302.55" width="1.0" height="1.45"/>
<rect x="1126.0" y="306.55" width="1.0" height="1.45"/>
<rect x="1130.0" y="306.55" width="56.25" height="1.45"/>
<rect x="1196.38" y="306.55" width="0.88" height="1.45"/>
<rect x="1125.0" y="310.55" width="1.0" height="1.45"/>
<rect x="1126.88" y="310.55" width="1.0" height="1.45"/>
<rect x="1140.25" y="310.55" width="1.0" height="1.45"/>
<rect x="1142.25" y="310.55" width="1.0" height="1.45"/>
<rect x="1126.25" y="312.55" width="23.75" height="1.45"/>
<rect x="1151.25" y="312.55" width="11.25" height="1.45"/>
<rect x="1163.75" y="312.55" width="5.0" height="1.45"/>
<rect x="1176.38" y="312.55" width="0.88" height="1.45"/>
<rect x="1122.5" y="314.55" width="1.0" height="1.45"/>
<rect x="1125.0" y="318.55" width="1.0" height="1.45"/>
<rect x="1126.88" y="318.55" width="1.0" height="1.45"/>
<rect x="1136.25" y="318.55" width="1.25" height="1.45"/>
<rect x="1150.12" y="318.55" width="1.0" height="1.45"/>
<rect x="1152.25" y="318.55" width="1.0" height="1.45"/>
<rect x="1126.25" y="320.55" width="9.38" height="1.45"/>
<rect x="1140.12" y="320.55" width="1.88" height="1.45"/>
<rect x="1130.0" y="322.55" width="5.62" height="1.45"/>
<rect x="1136.88" y="322.55" width="3.12" height="1.45"/>
<rect x="1141.0" y="322.55" width="5.88" height="1.45"/>
<rect x="1130.0" y="324.55" width="3.12" height="1.45"/>
<rect x="1141.38" y="324.55" width="0.75" height="1.45"/>
<rect x="1130.0" y="326.55" width="5.62" height="1.45"/>
<rect x="1140.12" y="326.55" width="0.75" height="1.45"/>
<rect x="1130.0" y="328.55" width="11.25" height="1.45"/>
<rect x="1142.5" y="328.55" width="11.88" height="1.45"/>
<rect x="1130.0" y="330.55" width="6.88" height="1.45"/>
<rect x="1142.62" y="330.55" width="0.75" height="1.45"/>
<rect x="1143.25" y="332.55" width="0.75" height="1.45"/>
<rect x="1126.25" y="334.55" width="2.75" height="1.45"/>
<rect x="1122.5" y="336.55" width="1.0" height="1.45"/>
<rect x="1133.25" y="340.55" width="0.75" height="1.45"/>
<rect x="1118.75" y="342.55" width="1.0" height="1.45"/>
<rect x="1149.5" y="346.55" width="0.75" height="1.45"/>
<rect x="1155.75" y="346.55" width="0.75" height="1.45"/>
<rect x="1161.38" y="346.55" width="0.75" height="1.45"/>
<rect x="1168.88" y="346.55" width="0.75" height="1.45"/>
<rect x="1186.5" y="346.55" width="1.0" height="1.45"/>
<rect x="1188.75" y="346.55" width="3.75" height="1.45"/>
<rect x="1194.0" y="346.55" width="1.0" height="1.45"/>
<rect x="1136.88" y="348.55" width="5.62" height="1.45"/>
<rect x="1146.25" y="348.55" width="8.12" height="1.45"/>
<rect x="1157.62" y="348.55" width="0.75" height="1.45"/>
<rect x="1131.0" y="350.55" width="4.62" height="1.45"/>
<rect x="1125.0" y="356.55" width="1.0" height="1.45"/>
<rect x="1138.12" y="356.55" width="14.38" height="1.45"/>
<rect x="1154.38" y="356.55" width="1.0" height="1.45"/>
<rect x="1126.25" y="358.55" width="3.75" height="1.45"/>
<rect x="1134.38" y="358.55" width="17.5" height="1.45"/>
<rect x="1137.0" y="360.55" width="0.75" height="1.45"/>
<rect x="1122.5" y="364.55" width="1.0" height="1.45"/>
<rect x="1131.25" y="364.55" width="0.88" height="1.45"/>
<rect x="1144.38" y="364.55" width="16.25" height="1.45"/>
<rect x="1162.5" y="364.55" width="1.0" height="1.45"/>
<rect x="1126.25" y="366.55" width="3.75" height="1.45"/>
<rect x="1137.0" y="366.55" width="2.0" height="1.45"/>
<rect x="1137.0" y="368.55" width="0.75" height="1.45"/>
<rect x="1122.5" y="372.55" width="1.0" height="1.45"/>
<rect x="1131.25" y="372.55" width="0.88" height="1.45"/>
<rect x="1144.38" y="372.55" width="23.75" height="1.45"/>
<rect x="1170.0" y="372.55" width="1.0" height="1.45"/>
<rect x="1129.75" y="374.55" width="4.62" height="1.45"/>
<rect x="1136.88" y="374.55" width="23.12" height="1.45"/>
<rect x="1129.75" y="376.55" width="4.62" height="1.45"/>
<rect x="1136.88" y="376.55" width="3.12" height="1.45"/>
<rect x="1144.38" y="376.55" width="5.62" height="1.45"/>
<rect x="1133.75" y="378.55" width="3.12" height="1.45"/>
<rect x="1143.75" y="378.55" width="6.25" height="1.45"/>
<rect x="1126.25" y="380.55" width="16.25" height="1.45"/>
<rect x="1148.25" y="380.55" width="1.0" height="1.45"/>
<rect x="1126.25" y="382.55" width="9.38" height="1.45"/>
<rect x="1140.12" y="382.55" width="1.88" height="1.45"/>
<rect x="1130.0" y="384.55" width="5.62" height="1.45"/>
<rect x="1136.88" y="384.55" width="3.12" height="1.45"/>
<rect x="1141.0" y="384.55" width="5.88" height="1.45"/>
<rect x="1130.0" y="386.55" width="3.12" height="1.45"/>
<rect x="1141.38" y="386.55" width="0.75" height="1.45"/>
<rect x="1130.0" y="388.55" width="5.62" height="1.45"/>
<rect x="1140.12" y="388.55" width="0.75" height="1.45"/>
<rect x="1130.0" y="390.55" width="11.25" height="1.45"/>
<rect x="1147.62" y="390.55" width="0.75" height="1.45"/>
<rect x="1135.12" y="392.55" width="0.75" height="1.45"/>
<rect x="1140.12" y="392.55" width="0.75" height="1.45"/>
<rect x="1143.25" y="394.55" width="0.75" height="1.45"/>
<rect x="1144.5" y="394.55" width="3.62" height="1.45"/>
<rect x="1126.25" y="396.55" width="2.75" height="1.45"/>
<rect x="1137.0" y="398.55" width="0.75" height="1.45"/>
<rect x="1122.5" y="402.55" width="1.0" height="1.45"/>
<rect x="1131.25" y="402.55" width="0.88" height="1.45"/>
<rect x="1144.38" y="402.55" width="21.25" height="1.45"/>
<rect x="1167.25" y="402.55" width="1.0" height="1.45"/>
<rect x="1129.75" y="404.55" width="4.62" height="1.45"/>
<rect x="1136.88" y="404.55" width="23.12" height="1.45"/>
<rect x="1129.75" y="406.55" width="4.62" height="1.45"/>
<rect x="1136.88" y="406.55" width="3.12" height="1.45"/>
<rect x="1144.38" y="406.55" width="5.62" height="1.45"/>
<rect x="1128.75" y="408.55" width="6.25" height="1.45"/>
<rect x="1140.88" y="408.55" width="1.0" height="1.45"/>
<rect x="1143.12" y="408.55" width="1.0" height="1.45"/>
<rect x="1137.0" y="410.55" width="3.62" height="1.45"/>
<rect x="1147.75" y="410.55" width="5.38" height="1.45"/>
<rect x="1126.25" y="412.55" width="1.0" height="1.45"/>
<rect x="1133.12" y="412.55" width="1.0" height="1.45"/>
<rect x="1137.0" y="414.55" width="3.62" height="1.45"/>
<rect x="1126.25" y="416.55" width="1.0" height="1.45"/>
<rect x="1122.5" y="420.55" width="1.0" height="1.45"/>
<rect x="1129.38" y="420.55" width="1.0" height="1.45"/>
<rect x="1133.75" y="422.55" width="22.5" height="1.45"/>
<rect x="1122.5" y="424.55" width="1.0" height="1.45"/>
<rect x="1126.0" y="428.55" width="15.25" height="1.45"/>
<rect x="1148.88" y="428.55" width="0.75" height="1.45"/>
<rect x="1126.0" y="430.55" width="15.25" height="1.45"/>
<rect x="1148.88" y="430.55" width="0.75" height="1.45"/>
<rect x="1126.0" y="434.55" width="17.75" height="1.45"/>
<rect x="1146.88" y="434.55" width="13.12" height="1.45"/>
<rect x="1126.0" y="436.55" width="18.38" height="1.45"/>
<rect x="1147.5" y="436.55" width="38.12" height="1.45"/>
<rect x="1122.5" y="440.55" width="8.12" height="1.45"/>
<rect x="1133.75" y="440.55" width="20.0" height="1.45"/>
<rect x="1154.75" y="440.55" width="1.0" height="1.45"/>
<rect x="1156.88" y="440.55" width="16.88" height="1.45"/>
<rect x="1175.0" y="440.55" width="1.0" height="1.45"/>
<rect x="1182.0" y="440.55" width="0.75" height="1.45"/>
<rect x="1125.0" y="444.55" width="21.25" height="1.45"/>
<rect x="1147.5" y="444.55" width="1.0" height="1.45"/>
<rect x="1126.25" y="446.55" width="7.5" height="1.45"/>
<rect x="1136.88" y="446.55" width="18.75" height="1.45"/>
<rect x="1122.5" y="448.55" width="1.0" height="1.45"/>
<rect x="1126.0" y="452.55" width="1.0" height="1.45"/>
<rect x="1130.0" y="452.55" width="25.0" height="1.45"/>
<rect x="1160.12" y="452.55" width="0.75" height="1.45"/>
<rect x="1161.88" y="452.55" width="9.38" height="1.45"/>
<rect x="1172.5" y="452.55" width="8.75" height="1.45"/>
<rect x="1192.0" y="452.55" width="0.88" height="1.45"/>
<rect x="1125.0" y="456.55" width="1.0" height="1.45"/>
<rect x="1126.88" y="456.55" width="1.0" height="1.45"/>
<rect x="1140.25" y="456.55" width="1.0" height="1.45"/>
<rect x="1142.25" y="456.55" width="1.0" height="1.45"/>
<rect x="1126.25" y="458.55" width="13.75" height="1.45"/>
<rect x="1146.25" y="458.55" width="3.75" height="1.45"/>
<rect x="1151.25" y="458.55" width="1.62" height="1.45"/>
<rect x="1157.62" y="458.55" width="0.75" height="1.45"/>
<rect x="1168.88" y="458.55" width="0.88" height="1.45"/>
<rect x="1122.5" y="460.55" width="1.0" height="1.45"/>
<rect x="1125.0" y="464.55" width="1.0" height="1.45"/>
<rect x="1126.88" y="464.55" width="1.0" height="1.45"/>
<rect x="1136.25" y="464.55" width="1.25" height="1.45"/>
<rect x="1150.12" y="464.55" width="1.0" height="1.45"/>
<rect x="1152.25" y="464.55" width="1.0" height="1.45"/>
<rect x="1126.25" y="466.55" width="9.38" height="1.45"/>
<rect x="1140.12" y="466.55" width="1.88" height="1.45"/>
<rect x="1130.0" y="468.55" width="5.62" height="1.45"/>
<rect x="1136.88" y="468.55" width="3.12" height="1.45"/>
<rect x="1141.0" y="468.55" width="5.88" height="1.45"/>
<rect x="1130.0" y="470.55" width="3.12" height="1.45"/>
<rect x="1141.38" y="470.55" width="0.75" height="1.45"/>
<rect x="1130.0" y="472.55" width="5.62" height="1.45"/>
<rect x="1140.12" y="472.55" width="0.75" height="1.45"/>
<rect x="1130.0" y="474.55" width="11.25" height="1.45"/>
<rect x="1147.62" y="474.55" width="0.75" height="1.45"/>
<rect x="1130.0" y="476.55" width="6.88" height="1.45"/>
<rect x="1142.62" y="476.55" width="0.75" height="1.45"/>
<rect x="1143.25" y="478.55" width="0.75" height="1.45"/>
<rect x="1126.25" y="480.55" width="2.75" height="1.45"/>
<rect x="1122.5" y="482.55" width="1.0" height="1.45"/>
<rect x="1133.25" y="484.55" width="0.75" height="1.45"/>
<rect x="1118.75" y="486.55" width="1.0" height="1.45"/>
<rect x="1143.88" y="490.55" width="0.75" height="1.45"/>
<rect x="1150.12" y="490.55" width="0.75" height="1.45"/>
<rect x="1154.88" y="490.55" width="0.75" height="1.45"/>
<rect x="1163.88" y="490.55" width="0.75" height="1.45"/>
<rect x="1185.12" y="490.55" width="0.75" height="1.45"/>
<rect x="1189.5" y="490.55" width="0.75" height="1.45"/>
<rect x="1207.0" y="490.55" width="0.75" height="1.45"/>
<rect x="1225.12" y="490.55" width="0.75" height="1.45"/>
<rect x="1237.5" y="490.55" width="16.25" height="1.45"/>
<rect x="1254.38" y="490.55" width="1.0" height="1.45"/>
<rect x="1126.0" y="492.55" width="12.12" height="1.45"/>
<rect x="1145.12" y="492.55" width="0.75" height="1.45"/>
<rect x="1138.5" y="494.55" width="6.5" height="1.45"/>
<rect x="1148.12" y="494.55" width="24.38" height="1.45"/>
<rect x="1125.0" y="504.55" width="1.0" height="1.45"/>
<rect x="1138.12" y="504.55" width="20.0" height="1.45"/>
<rect x="1161.88" y="504.55" width="15.62" height="1.45"/>
<rect x="1179.38" y="504.55" width="1.0" height="1.45"/>
<rect x="1128.75" y="508.55" width="12.5" height="1.45"/>
<rect x="1154.0" y="508.55" width="1.0" height="1.45"/>
<rect x="1156.0" y="508.55" width="4.0" height="1.45"/>
<rect x="1176.5" y="508.55" width="6.62" height="1.45"/>
<rect x="1187.75" y="508.55" width="0.75" height="1.45"/>
<rect x="1189.5" y="508.55" width="1.0" height="1.45"/>
<rect x="1130.0" y="510.55" width="10.62" height="1.45"/>
<rect x="1153.5" y="510.55" width="8.38" height="1.45"/>
<rect x="1126.25" y="512.55" width="1.0" height="1.45"/>
<rect x="1129.0" y="516.55" width="1.0" height="1.45"/>
<rect x="1141.88" y="516.55" width="23.12" height="1.45"/>
<rect x="1166.5" y="516.55" width="1.0" height="1.45"/>
<rect x="1130.0" y="518.55" width="27.5" height="1.45"/>
<rect x="1126.25" y="520.55" width="1.0" height="1.45"/>
<rect x="1137.62" y="524.55" width="0.75" height="1.45"/>
<rect x="1122.5" y="526.55" width="1.0" height="1.45"/>
<rect x="1125.0" y="530.55" width="1.0" height="1.45"/>
<rect x="1138.12" y="530.55" width="15.62" height="1.45"/>
<rect x="1155.25" y="530.55" width="1.0" height="1.45"/>
<rect x="1122.5" y="542.55" width="1.0" height="1.45"/>
<rect x="1131.25" y="542.55" width="0.88" height="1.45"/>
<rect x="1132.25" y="542.55" width="8.38" height="1.45"/>
<rect x="1150.12" y="542.55" width="0.75" height="1.45"/>
<rect x="1151.5" y="542.55" width="1.0" height="1.45"/>
<rect x="1129.75" y="544.55" width="4.62" height="1.45"/>
<rect x="1136.88" y="544.55" width="23.12" height="1.45"/>
<rect x="1133.75" y="546.55" width="3.75" height="1.45"/>
<rect x="1140.62" y="546.55" width="6.88" height="1.45"/>
<rect x="1128.75" y="550.55" width="3.12" height="1.45"/>
<rect x="1142.75" y="550.55" width="3.5" height="1.45"/>
<rect x="1146.88" y="550.55" width="13.12" height="1.45"/>
<rect x="1163.75" y="550.55" width="13.75" height="1.45"/>
<rect x="1179.38" y="550.55" width="1.0" height="1.45"/>
<rect x="1133.5" y="552.55" width="15.25" height="1.45"/>
<rect x="1156.5" y="552.55" width="23.5" height="1.45"/>
<rect x="1181.25" y="552.55" width="8.75" height="1.45"/>
<rect x="1132.75" y="554.55" width="1.0" height="1.45"/>
<rect x="1145.75" y="554.55" width="0.75" height="1.45"/>
<rect x="1147.5" y="554.55" width="1.0" height="1.45"/>
<rect x="1141.0" y="556.55" width="34.62" height="1.45"/>
<rect x="1176.88" y="556.55" width="3.75" height="1.45"/>
<rect x="1138.25" y="558.55" width="7.38" height="1.45"/>
<rect x="1148.12" y="558.55" width="5.62" height="1.45"/>
<rect x="1130.0" y="560.55" width="1.0" height="1.45"/>
<rect x="1145.75" y="656.55" width="0.75" height="1.45"/>
<rect x="1151.12" y="656.55" width="0.75" height="1.45"/>
<rect x="1153.25" y="658.55" width="0.75" height="1.45"/>
<rect x="1155.0" y="658.55" width="4.38" height="1.45"/>
<rect x="1137.25" y="660.55" width="2.75" height="1.45"/>
<rect x="1133.75" y="662.55" width="1.0" height="1.45"/>
<rect x="1130.0" y="664.55" width="1.0" height="1.45"/>
<rect x="1126.25" y="666.55" width="1.0" height="1.45"/>
<rect x="1122.5" y="678.55" width="1.0" height="1.45"/>
<rect x="1135.0" y="680.55" width="6.25" height="1.45"/>
<rect x="1141.38" y="680.55" width="0.75" height="1.45"/>
<rect x="1155.12" y="680.55" width="0.88" height="1.45"/>
<rect x="1170.12" y="680.55" width="0.88" height="1.45"/>
<rect x="1118.75" y="682.55" width="1.0" height="1.45"/>
<rect x="1147.0" y="686.55" width="0.75" height="1.45"/>
<rect x="1155.75" y="686.55" width="0.75" height="1.45"/>
<rect x="1162.0" y="686.55" width="0.75" height="1.45"/>
<rect x="1191.5" y="686.55" width="1.0" height="1.45"/>
<rect x="1125.62" y="688.55" width="5.0" height="1.45"/>
<rect x="1133.12" y="688.55" width="10.0" height="1.45"/>
<rect x="1125.0" y="692.55" width="3.75" height="1.45"/>
<rect x="1130.88" y="692.55" width="13.5" height="1.45"/>
<rect x="1147.5" y="692.55" width="12.5" height="1.45"/>
<rect x="1161.5" y="692.55" width="1.0" height="1.45"/>
<rect x="1126.25" y="694.55" width="6.88" height="1.45"/>
<rect x="1136.38" y="694.55" width="0.75" height="1.45"/>
<rect x="1132.5" y="696.55" width="11.88" height="1.45"/>
<rect x="1146.88" y="696.55" width="25.0" height="1.45"/>
<rect x="1129.8" y="564.55" width="4.62" height="1.45"/>
<rect x="1137.2" y="564.55" width="6.47" height="1.45"/>
<rect x="1149.22" y="564.55" width="0.93" height="1.45"/>
<rect x="1151.08" y="564.55" width="0.92" height="1.45"/>
<rect x="1126.1" y="670.55" width="4.62" height="1.45"/>
<rect x="1133.5" y="670.55" width="6.47" height="1.45"/>
<rect x="1145.53" y="670.55" width="0.92" height="1.45"/>
<rect x="1147.38" y="670.55" width="0.92" height="1.45"/>
<rect x="1133.5" y="568.55" width="0.92" height="1.45"/>
<rect x="1146.45" y="568.55" width="22.2" height="1.45"/>
<rect x="1192.7" y="568.55" width="0.92" height="1.45"/>
<rect x="1129.8" y="674.55" width="0.92" height="1.45"/>
<rect x="1142.75" y="674.55" width="22.2" height="1.45"/>
<rect x="1189.0" y="674.55" width="0.92" height="1.45"/>
<rect x="1129.8" y="570.55" width="2.78" height="1.45"/>
<rect x="1126.1" y="676.55" width="2.78" height="1.45"/>
<rect x="1126.1" y="572.55" width="0.93" height="1.45"/>
<rect x="1122.4" y="576.55" width="0.92" height="1.45"/>
<rect x="1131.65" y="576.55" width="9.25" height="1.45"/>
<rect x="1148.3" y="576.55" width="0.92" height="1.45"/>
<rect x="1150.15" y="576.55" width="0.92" height="1.45"/>
<rect x="1133.5" y="578.55" width="34.22" height="1.45"/>
<rect x="1168.65" y="578.55" width="5.55" height="1.45"/>
<rect x="1175.12" y="578.55" width="3.7" height="1.45"/>
<rect x="1122.4" y="582.55" width="0.92" height="1.45"/>
<rect x="1128.88" y="582.55" width="0.92" height="1.45"/>
<rect x="1129.8" y="584.55" width="4.62" height="1.45"/>
<rect x="1137.2" y="584.55" width="18.5" height="1.45"/>
<rect x="1156.62" y="584.55" width="3.7" height="1.45"/>
<rect x="1129.8" y="608.55" width="14.8" height="1.45"/>
<rect x="1145.53" y="608.55" width="6.47" height="1.45"/>
<rect x="1154.78" y="608.55" width="9.25" height="1.45"/>
<rect x="1171.42" y="608.55" width="0.92" height="1.45"/>
<rect x="1129.8" y="610.55" width="0.92" height="1.45"/>
<rect x="1131.65" y="610.55" width="16.65" height="1.45"/>
<rect x="1129.8" y="612.55" width="0.92" height="1.45"/>
<rect x="1131.65" y="612.55" width="0.92" height="1.45"/>
<rect x="1135.35" y="612.55" width="6.48" height="1.45"/>
<rect x="1145.53" y="612.55" width="2.77" height="1.45"/>
<rect x="1149.22" y="612.55" width="23.12" height="1.45"/>
<rect x="1175.12" y="612.55" width="10.17" height="1.45"/>
<rect x="1186.22" y="612.55" width="0.93" height="1.45"/>
<rect x="1191.78" y="612.55" width="12.95" height="1.45"/>
<rect x="1216.75" y="612.55" width="0.92" height="1.45"/>
<rect x="1218.6" y="612.55" width="4.62" height="1.45"/>
<rect x="1129.8" y="616.55" width="24.05" height="1.45"/>
<rect x="1156.62" y="616.55" width="15.72" height="1.45"/>
<rect x="1129.8" y="618.55" width="0.92" height="1.45"/>
<rect x="1144.6" y="618.55" width="1.85" height="1.45"/>
<rect x="1147.38" y="618.55" width="4.62" height="1.45"/>
<rect x="1154.78" y="618.55" width="6.47" height="1.45"/>
<rect x="1129.8" y="620.55" width="0.92" height="1.45"/>
<rect x="1131.65" y="620.55" width="33.3" height="1.45"/>
<rect x="1165.88" y="620.55" width="3.7" height="1.45"/>
<rect x="1133.5" y="624.55" width="8.33" height="1.45"/>
<rect x="1146.45" y="624.55" width="2.77" height="1.45"/>
<rect x="1130.72" y="626.55" width="7.4" height="1.45"/>
<rect x="1140.9" y="626.55" width="5.55" height="1.45"/>
<rect x="1130.72" y="628.55" width="10.18" height="1.45"/>
<rect x="1143.67" y="628.55" width="9.25" height="1.45"/>
<rect x="1128.88" y="632.55" width="0.92" height="1.45"/>
<rect x="1149.22" y="632.55" width="0.93" height="1.45"/>
<rect x="1151.08" y="632.55" width="0.92" height="1.45"/>
<rect x="1132.58" y="634.55" width="0.92" height="1.45"/>
<rect x="1145.53" y="634.55" width="7.4" height="1.45"/>
<rect x="1160.33" y="634.55" width="4.62" height="1.45"/>
<rect x="1180.67" y="634.55" width="8.33" height="1.45"/>
<rect x="1189.92" y="634.55" width="0.92" height="1.45"/>
<rect x="1137.2" y="636.55" width="0.92" height="1.45"/>
<rect x="1146.45" y="636.55" width="3.7" height="1.45"/>
<rect x="1153.85" y="636.55" width="0.93" height="1.45"/>
<rect x="1167.72" y="636.55" width="0.93" height="1.45"/>
<rect x="1169.58" y="636.55" width="17.58" height="1.45"/>
<rect x="1188.08" y="636.55" width="0.92" height="1.45"/>
<rect x="1139.97" y="638.55" width="17.58" height="1.45"/>
<rect x="1158.47" y="638.55" width="4.62" height="1.45"/>
<rect x="1166.8" y="638.55" width="11.1" height="1.45"/>
<rect x="1181.6" y="638.55" width="0.93" height="1.45"/>
<rect x="1183.45" y="638.55" width="0.92" height="1.45"/>
<rect x="1140.9" y="640.55" width="24.05" height="1.45"/>
<rect x="1137.2" y="642.55" width="0.92" height="1.45"/>
<rect x="1137.2" y="646.55" width="10.17" height="1.45"/>
<rect x="1151.08" y="646.55" width="1.85" height="1.45"/>
<rect x="1140.9" y="648.55" width="5.55" height="1.45"/>
<rect x="1159.4" y="648.55" width="8.32" height="1.45"/>
<rect x="1140.9" y="650.55" width="2.77" height="1.45"/>
<rect x="1144.6" y="650.55" width="3.7" height="1.45"/>
<rect x="1149.22" y="650.55" width="15.73" height="1.45"/>
<rect x="1140.9" y="652.55" width="5.55" height="1.45"/>
<rect x="1147.38" y="652.55" width="3.7" height="1.45"/>
<rect x="1156.62" y="652.55" width="0.92" height="1.45"/>
<rect x="1140.9" y="654.55" width="12.02" height="1.45"/>
<rect x="1153.85" y="654.55" width="3.7" height="1.45"/>
<rect x="1163.1" y="654.55" width="0.93" height="1.45"/>
</g>
<g fill="#f92672" fill-opacity="0.8">
<rect x="1126.25" y="94.55" width="2.5" height="1.45"/>
<rect x="1155.0" y="94.55" width="1.5" height="1.45"/>
<rect x="1126.25" y="98.55" width="1.88" height="1.45"/>
<rect x="1155.25" y="100.55" width="1.62" height="1.45"/>
<rect x="1128.12" y="104.55" width="6.25" height="1.45"/>
<rect x="1155.25" y="106.55" width="1.62" height="1.45"/>
<rect x="1128.12" y="110.55" width="6.25" height="1.45"/>
<rect x="1155.25" y="112.55" width="1.62" height="1.45"/>
<rect x="1126.25" y="120.55" width="1.88" height="1.45"/>
<rect x="1130.0" y="132.55" width="2.5" height="1.45"/>
<rect x="1148.5" y="132.55" width="1.5" height="1.45"/>
<rect x="1130.0" y="136.55" width="2.75" height="1.45"/>
<rect x="1145.75" y="136.55" width="1.75" height="1.45"/>
<rect x="1133.75" y="138.55" width="1.88" height="1.45"/>
<rect x="1142.5" y="138.55" width="2.5" height="1.45"/>
<rect x="1156.88" y="138.55" width="1.88" height="1.45"/>
<rect x="1155.62" y="140.55" width="1.5" height="1.45"/>
<rect x="1137.25" y="142.55" width="1.75" height="1.45"/>
<rect x="1141.0" y="144.55" width="4.62" height="1.45"/>
<rect x="1142.25" y="152.55" width="1.5" height="1.45"/>
<rect x="1130.0" y="156.55" width="6.88" height="1.45"/>
<rect x="1122.5" y="164.55" width="1.5" height="1.45"/>
<rect x="1126.25" y="166.55" width="2.5" height="1.45"/>
<rect x="1118.75" y="182.55" width="5.25" height="1.45"/>
<rect x="1122.5" y="184.55" width="2.25" height="1.45"/>
<rect x="1130.62" y="184.55" width="1.25" height="1.45"/>
<rect x="1138.12" y="184.55" width="1.88" height="1.45"/>
<rect x="1122.5" y="188.55" width="2.25" height="1.45"/>
<rect x="1135.0" y="188.55" width="1.25" height="1.45"/>
<rect x="1142.5" y="188.55" width="2.75" height="1.45"/>
<rect x="1122.5" y="190.55" width="2.25" height="1.45"/>
<rect x="1140.0" y="190.55" width="1.25" height="1.45"/>
<rect x="1145.62" y="190.55" width="1.88" height="1.45"/>
<rect x="1158.12" y="190.55" width="1.88" height="1.45"/>
<rect x="1162.5" y="190.55" width="1.5" height="1.45"/>
<rect x="1122.5" y="194.55" width="2.25" height="1.45"/>
<rect x="1141.88" y="194.55" width="1.25" height="1.45"/>
<rect x="1155.62" y="194.55" width="1.88" height="1.45"/>
<rect x="1122.5" y="196.55" width="1.5" height="1.45"/>
<rect x="1135.0" y="196.55" width="1.88" height="1.45"/>
<rect x="1145.62" y="196.55" width="5.0" height="1.45"/>
<rect x="1122.5" y="200.55" width="2.25" height="1.45"/>
<rect x="1142.5" y="200.55" width="1.25" height="1.45"/>
<rect x="1155.0" y="200.55" width="1.88" height="1.45"/>
<rect x="1122.5" y="202.55" width="2.25" height="1.45"/>
<rect x="1142.5" y="202.55" width="1.25" height="1.45"/>
<rect x="1159.38" y="202.55" width="1.88" height="1.45"/>
<rect x="1122.5" y="206.55" width="2.25" height="1.45"/>
<rect x="1128.12" y="206.55" width="1.62" height="1.45"/>
<rect x="1122.5" y="210.55" width="1.5" height="1.45"/>
<rect x="1133.75" y="210.55" width="1.88" height="1.45"/>
<rect x="1122.5" y="218.55" width="1.5" height="1.45"/>
<rect x="1133.75" y="218.55" width="1.88" height="1.45"/>
<rect x="1122.5" y="238.55" width="5.62" height="1.45"/>
<rect x="1118.75" y="244.55" width="5.25" height="1.45"/>
<rect x="1122.5" y="246.55" width="2.25" height="1.45"/>
<rect x="1135.0" y="246.55" width="1.25" height="1.45"/>
<rect x="1143.12" y="246.55" width="2.5" height="1.45"/>
<rect x="1154.38" y="246.55" width="2.5" height="1.45"/>
<rect x="1122.5" y="252.55" width="1.5" height="1.45"/>
<rect x="1135.62" y="252.55" width="1.88" height="1.45"/>
<rect x="1126.25" y="256.55" width="5.62" height="1.45"/>
<rect x="1122.5" y="262.55" width="2.25" height="1.45"/>
<rect x="1140.0" y="262.55" width="1.25" height="1.45"/>
<rect x="1122.5" y="266.55" width="2.25" height="1.45"/>
<rect x="1122.5" y="268.55" width="1.5" height="1.45"/>
<rect x="1135.62" y="268.55" width="1.88" height="1.45"/>
<rect x="1156.88" y="268.55" width="1.88" height="1.45"/>
<rect x="1138.12" y="270.55" width="1.25" height="1.45"/>
<rect x="1124.0" y="274.55" width="4.12" height="1.45"/>
<rect x="1138.12" y="276.55" width="1.25" height="1.45"/>
<rect x="1122.5" y="282.55" width="2.25" height="1.45"/>
<rect x="1142.5" y="282.55" width="1.5" height="1.45"/>
<rect x="1122.5" y="284.55" width="2.25" height="1.45"/>
<rect x="1142.5" y="284.55" width="1.5" height="1.45"/>
<rect x="1122.5" y="288.55" width="2.25" height="1.45"/>
<rect x="1145.0" y="288.55" width="1.25" height="1.45"/>
<rect x="1122.5" y="290.55" width="2.25" height="1.45"/>
<rect x="1145.25" y="290.55" width="1.25" height="1.45"/>
<rect x="1131.88" y="294.55" width="1.25" height="1.45"/>
<rect x="1122.5" y="298.55" width="1.5" height="1.45"/>
<rect x="1135.0" y="300.55" width="1.5" height="1.45"/>
<rect x="1122.5" y="306.55" width="2.25" height="1.45"/>
<rect x="1128.12" y="306.55" width="1.62" height="1.45"/>
<rect x="1122.5" y="310.55" width="1.5" height="1.45"/>
<rect x="1133.75" y="310.55" width="1.88" height="1.45"/>
<rect x="1122.5" y="318.55" width="1.5" height="1.45"/>
<rect x="1133.75" y="318.55" width="1.88" height="1.45"/>
<rect x="1122.5" y="340.55" width="5.62" height="1.45"/>
<rect x="1118.75" y="346.55" width="5.25" height="1.45"/>
<rect x="1122.5" y="348.55" width="2.25" height="1.45"/>
<rect x="1135.0" y="348.55" width="1.25" height="1.45"/>
<rect x="1143.12" y="348.55" width="2.5" height="1.45"/>
<rect x="1122.5" y="350.55" width="2.25" height="1.45"/>
<rect x="1122.5" y="356.55" width="1.5" height="1.45"/>
<rect x="1135.62" y="356.55" width="1.88" height="1.45"/>
<rect x="1126.25" y="360.55" width="5.62" height="1.45"/>
<rect x="1124.0" y="364.55" width="6.62" height="1.45"/>
<rect x="1141.88" y="364.55" width="1.88" height="1.45"/>
<rect x="1126.25" y="368.55" width="5.62" height="1.45"/>
<rect x="1124.0" y="372.55" width="6.62" height="1.45"/>
<rect x="1141.88" y="372.55" width="1.88" height="1.45"/>
<rect x="1126.25" y="374.55" width="2.5" height="1.45"/>
<rect x="1135.0" y="374.55" width="1.25" height="1.45"/>
<rect x="1126.25" y="376.55" width="2.5" height="1.45"/>
<rect x="1135.0" y="376.55" width="1.25" height="1.45"/>
<rect x="1140.62" y="376.55" width="3.12" height="1.45"/>
<rect x="1131.88" y="378.55" width="1.25" height="1.45"/>
<rect x="1126.25" y="398.55" width="5.62" height="1.45"/>
<rect x="1124.0" y="402.55" width="6.62" height="1.45"/>
<rect x="1141.88" y="402.55" width="1.88" height="1.45"/>
<rect x="1126.25" y="404.55" width="2.5" height="1.45"/>
<rect x="1135.0" y="404.55" width="1.25" height="1.45"/>
<rect x="1126.25" y="406.55" width="2.5" height="1.45"/>
<rect x="1135.0" y="406.55" width="1.25" height="1.45"/>
<rect x="1140.62" y="406.55" width="3.12" height="1.45"/>
<rect x="1126.25" y="408.55" width="1.88" height="1.45"/>
<rect x="1135.25" y="408.55" width="1.62" height="1.45"/>
<rect x="1135.38" y="410.55" width="1.25" height="1.45"/>
<rect x="1128.12" y="412.55" width="3.75" height="1.45"/>
<rect x="1135.38" y="414.55" width="1.25" height="1.45"/>
<rect x="1124.0" y="420.55" width="4.12" height="1.45"/>
<rect x="1131.88" y="422.55" width="1.25" height="1.45"/>
<rect x="1122.5" y="428.55" width="2.25" height="1.45"/>
<rect x="1142.5" y="428.55" width="1.5" height="1.45"/>
<rect x="1122.5" y="430.55" width="2.25" height="1.45"/>
<rect x="1142.5" y="430.55" width="1.5" height="1.45"/>
<rect x="1122.5" y="434.55" width="2.25" height="1.45"/>
<rect x="1145.0" y="434.55" width="1.25" height="1.45"/>
<rect x="1122.5" y="436.55" width="2.25" height="1.45"/>
<rect x="1145.25" y="436.55" width="1.25" height="1.45"/>
<rect x="1131.88" y="440.55" width="1.25" height="1.45"/>
<rect x="1122.5" y="444.55" width="1.5" height="1.45"/>
<rect x="1135.0" y="446.55" width="1.5" height="1.45"/>
<rect x="1122.5" y="452.55" width="2.25" height="1.45"/>
<rect x="1128.12" y="452.55" width="1.62" height="1.45"/>
<rect x="1122.5" y="456.55" width="1.5" height="1.45"/>
<rect x="1133.75" y="456.55" width="1.88" height="1.45"/>
<rect x="1122.5" y="464.55" width="1.5" height="1.45"/>
<rect x="1133.75" y="464.55" width="1.88" height="1.45"/>
<rect x="1122.5" y="484.55" width="5.62" height="1.45"/>
<rect x="1118.75" y="490.55" width="5.25" height="1.45"/>
<rect x="1122.5" y="492.55" width="2.25" height="1.45"/>
<rect x="1139.0" y="492.55" width="1.25" height="1.45"/>
<rect x="1122.5" y="494.55" width="2.25" height="1.45"/>
<rect x="1146.25" y="494.55" width="1.25" height="1.45"/>
<rect x="1122.5" y="504.55" width="1.5" height="1.45"/>
<rect x="1135.62" y="504.55" width="1.88" height="1.45"/>
<rect x="1159.38" y="504.55" width="1.88" height="1.45"/>
<rect x="1126.25" y="508.55" width="1.88" height="1.45"/>
<rect x="1161.25" y="508.55" width="1.88" height="1.45"/>
<rect x="1184.0" y="508.55" width="1.25" height="1.45"/>
<rect x="1126.25" y="516.55" width="1.88" height="1.45"/>
<rect x="1139.38" y="516.55" width="1.88" height="1.45"/>
<rect x="1131.88" y="524.55" width="1.25" height="1.45"/>
<rect x="1122.5" y="530.55" width="1.5" height="1.45"/>
<rect x="1135.62" y="530.55" width="1.88" height="1.45"/>
<rect x="1124.0" y="542.55" width="6.62" height="1.45"/>
<rect x="1141.88" y="542.55" width="1.88" height="1.45"/>
<rect x="1126.25" y="544.55" width="2.5" height="1.45"/>
<rect x="1135.0" y="544.55" width="1.25" height="1.45"/>
<rect x="1131.88" y="546.55" width="1.25" height="1.45"/>
<rect x="1138.12" y="546.55" width="1.88" height="1.45"/>
<rect x="1126.25" y="550.55" width="1.88" height="1.45"/>
<rect x="1141.0" y="550.55" width="1.25" height="1.45"/>
<rect x="1161.25" y="550.55" width="1.88" height="1.45"/>
<rect x="1130.0" y="552.55" width="2.5" height="1.45"/>
<rect x="1150.0" y="552.55" width="1.25" height="1.45"/>
<rect x="1130.0" y="554.55" width="1.88" height="1.45"/>
<rect x="1139.38" y="554.55" width="1.88" height="1.45"/>
<rect x="1139.0" y="556.55" width="1.25" height="1.45"/>
<rect x="1146.25" y="558.55" width="1.25" height="1.45"/>
<rect x="1122.5" y="680.55" width="5.62" height="1.45"/>
<rect x="1118.75" y="686.55" width="6.0" height="1.45"/>
<rect x="1122.5" y="688.55" width="2.25" height="1.45"/>
<rect x="1131.25" y="688.55" width="1.25" height="1.45"/>
<rect x="1122.5" y="692.55" width="1.5" height="1.45"/>
<rect x="1129.0" y="692.55" width="1.62" height="1.45"/>
<rect x="1145.62" y="692.55" width="1.25" height="1.45"/>
<rect x="1134.38" y="694.55" width="1.88" height="1.45"/>
<rect x="1130.62" y="696.55" width="1.25" height="1.45"/>
<rect x="1144.75" y="696.55" width="1.5" height="1.45"/>
<rect x="1139.05" y="566.55" width="1.85" height="1.45"/>
<rect x="1154.78" y="566.55" width="1.85" height="1.45"/>
<rect x="1135.35" y="672.55" width="1.85" height="1.45"/>
<rect x="1151.08" y="672.55" width="1.85" height="1.45"/>
<rect x="1143.67" y="568.55" width="1.85" height="1.45"/>
<rect x="1169.58" y="568.55" width="1.85" height="1.45"/>
<rect x="1177.9" y="568.55" width="1.85" height="1.45"/>
<rect x="1139.97" y="674.55" width="1.85" height="1.45"/>
<rect x="1165.88" y="674.55" width="1.85" height="1.45"/>
<rect x="1174.2" y="674.55" width="1.85" height="1.45"/>
<rect x="1124.25" y="576.55" width="3.7" height="1.45"/>
<rect x="1128.88" y="576.55" width="1.85" height="1.45"/>
<rect x="1141.83" y="576.55" width="1.85" height="1.45"/>
<rect x="1131.65" y="578.55" width="0.92" height="1.45"/>
<rect x="1124.25" y="582.55" width="3.7" height="1.45"/>
<rect x="1126.1" y="584.55" width="2.78" height="1.45"/>
<rect x="1135.35" y="584.55" width="0.93" height="1.45"/>
<rect x="1126.1" y="608.55" width="2.78" height="1.45"/>
<rect x="1152.92" y="608.55" width="0.92" height="1.45"/>
<rect x="1164.95" y="608.55" width="1.85" height="1.45"/>
<rect x="1132.58" y="612.55" width="1.85" height="1.45"/>
<rect x="1142.75" y="612.55" width="1.85" height="1.45"/>
<rect x="1172.35" y="612.55" width="2.78" height="1.45"/>
<rect x="1187.15" y="612.55" width="3.7" height="1.45"/>
<rect x="1126.1" y="616.55" width="2.78" height="1.45"/>
<rect x="1154.78" y="616.55" width="0.92" height="1.45"/>
<rect x="1152.0" y="618.55" width="2.78" height="1.45"/>
<rect x="1131.65" y="624.55" width="0.92" height="1.45"/>
<rect x="1139.05" y="626.55" width="0.92" height="1.45"/>
<rect x="1141.83" y="628.55" width="0.92" height="1.45"/>
<rect x="1126.1" y="632.55" width="1.85" height="1.45"/>
<rect x="1142.75" y="632.55" width="1.85" height="1.45"/>
<rect x="1129.8" y="634.55" width="1.85" height="1.45"/>
<rect x="1153.85" y="634.55" width="0.93" height="1.45"/>
<rect x="1157.55" y="634.55" width="1.85" height="1.45"/>
<rect x="1165.88" y="634.55" width="1.85" height="1.45"/>
<rect x="1133.5" y="636.55" width="2.78" height="1.45"/>
<rect x="1143.67" y="636.55" width="1.85" height="1.45"/>
<rect x="1151.08" y="636.55" width="1.85" height="1.45"/>
<rect x="1137.2" y="638.55" width="1.85" height="1.45"/>
<rect x="1164.03" y="638.55" width="1.85" height="1.45"/>
<rect x="1178.83" y="638.55" width="0.92" height="1.45"/>
</g>
<g fill="#66d9ef" fill-opacity="0.62">
<rect x="1130.0" y="122.55" width="4.38" height="1.45"/>
<rect x="1122.5" y="172.55" width="3.75" height="1.45"/>
<rect x="1125.0" y="182.55" width="7.5" height="1.45"/>
<rect x="1126.0" y="188.55" width="8.38" height="1.45"/>
<rect x="1148.12" y="190.55" width="9.38" height="1.45"/>
<rect x="1170.62" y="190.55" width="9.38" height="1.45"/>
<rect x="1135.0" y="194.55" width="6.25" height="1.45"/>
<rect x="1186.88" y="206.55" width="9.38" height="1.45"/>
<rect x="1128.12" y="210.55" width="4.38" height="1.45"/>
<rect x="1156.25" y="212.55" width="6.88" height="1.45"/>
<rect x="1128.12" y="218.55" width="4.38" height="1.45"/>
<rect x="1137.75" y="218.55" width="12.25" height="1.45"/>
<rect x="1136.0" y="220.55" width="4.0" height="1.45"/>
<rect x="1133.75" y="224.55" width="7.5" height="1.45"/>
<rect x="1138.12" y="230.55" width="4.38" height="1.45"/>
<rect x="1130.0" y="232.55" width="13.12" height="1.45"/>
<rect x="1145.0" y="232.55" width="12.5" height="1.45"/>
<rect x="1125.0" y="244.55" width="7.5" height="1.45"/>
<rect x="1126.0" y="246.55" width="8.38" height="1.45"/>
<rect x="1126.25" y="252.55" width="8.12" height="1.45"/>
<rect x="1130.0" y="254.55" width="3.75" height="1.45"/>
<rect x="1137.75" y="266.55" width="6.62" height="1.45"/>
<rect x="1126.25" y="268.55" width="8.75" height="1.45"/>
<rect x="1186.88" y="306.55" width="9.38" height="1.45"/>
<rect x="1128.12" y="310.55" width="4.38" height="1.45"/>
<rect x="1169.38" y="312.55" width="6.88" height="1.45"/>
<rect x="1128.12" y="318.55" width="4.38" height="1.45"/>
<rect x="1137.75" y="318.55" width="12.25" height="1.45"/>
<rect x="1136.0" y="320.55" width="4.0" height="1.45"/>
<rect x="1133.75" y="324.55" width="7.5" height="1.45"/>
<rect x="1138.12" y="330.55" width="4.38" height="1.45"/>
<rect x="1130.0" y="332.55" width="13.12" height="1.45"/>
<rect x="1145.0" y="332.55" width="12.5" height="1.45"/>
<rect x="1125.0" y="346.55" width="7.5" height="1.45"/>
<rect x="1126.0" y="348.55" width="8.38" height="1.45"/>
<rect x="1126.0" y="350.55" width="4.62" height="1.45"/>
<rect x="1126.25" y="356.55" width="8.12" height="1.45"/>
<rect x="1130.0" y="358.55" width="3.75" height="1.45"/>
<rect x="1132.25" y="364.55" width="8.38" height="1.45"/>
<rect x="1130.0" y="366.55" width="6.88" height="1.45"/>
<rect x="1132.25" y="372.55" width="8.38" height="1.45"/>
<rect x="1126.25" y="378.55" width="4.38" height="1.45"/>
<rect x="1137.5" y="378.55" width="5.62" height="1.45"/>
<rect x="1143.12" y="380.55" width="5.0" height="1.45"/>
<rect x="1136.0" y="382.55" width="4.0" height="1.45"/>
<rect x="1133.75" y="386.55" width="7.5" height="1.45"/>
<rect x="1143.12" y="390.55" width="4.38" height="1.45"/>
<rect x="1130.0" y="392.55" width="5.0" height="1.45"/>
<rect x="1130.0" y="394.55" width="13.12" height="1.45"/>
<rect x="1132.25" y="402.55" width="8.38" height="1.45"/>
<rect x="1130.0" y="410.55" width="4.38" height="1.45"/>
<rect x="1140.75" y="410.55" width="6.75" height="1.45"/>
<rect x="1130.0" y="414.55" width="4.38" height="1.45"/>
<rect x="1140.75" y="414.55" width="6.12" height="1.45"/>
<rect x="1126.25" y="422.55" width="4.38" height="1.45"/>
<rect x="1155.62" y="452.55" width="4.38" height="1.45"/>
<rect x="1182.25" y="452.55" width="9.62" height="1.45"/>
<rect x="1128.12" y="456.55" width="4.38" height="1.45"/>
<rect x="1140.12" y="458.55" width="5.5" height="1.45"/>
<rect x="1153.12" y="458.55" width="4.38" height="1.45"/>
<rect x="1159.38" y="458.55" width="9.38" height="1.45"/>
<rect x="1128.12" y="464.55" width="4.38" height="1.45"/>
<rect x="1137.75" y="464.55" width="12.25" height="1.45"/>
<rect x="1136.0" y="466.55" width="4.0" height="1.45"/>
<rect x="1133.75" y="470.55" width="7.5" height="1.45"/>
<rect x="1143.12" y="474.55" width="4.38" height="1.45"/>
<rect x="1138.12" y="476.55" width="4.38" height="1.45"/>
<rect x="1130.0" y="478.55" width="13.12" height="1.45"/>
<rect x="1145.0" y="478.55" width="12.5" height="1.45"/>
<rect x="1125.0" y="490.55" width="7.5" height="1.45"/>
<rect x="1126.0" y="494.55" width="12.12" height="1.45"/>
<rect x="1126.25" y="504.55" width="8.12" height="1.45"/>
<rect x="1141.25" y="508.55" width="12.5" height="1.45"/>
<rect x="1163.75" y="508.55" width="12.5" height="1.45"/>
<rect x="1141.0" y="510.55" width="12.12" height="1.45"/>
<rect x="1130.0" y="516.55" width="8.12" height="1.45"/>
<rect x="1126.25" y="524.55" width="4.38" height="1.45"/>
<rect x="1126.25" y="530.55" width="8.12" height="1.45"/>
<rect x="1126.25" y="546.55" width="4.38" height="1.45"/>
<rect x="1131.88" y="550.55" width="8.12" height="1.45"/>
<rect x="1152.25" y="552.55" width="4.0" height="1.45"/>
<rect x="1133.75" y="554.55" width="4.38" height="1.45"/>
<rect x="1133.75" y="556.55" width="4.38" height="1.45"/>
<rect x="1133.75" y="558.55" width="4.38" height="1.45"/>
<rect x="1141.0" y="656.55" width="4.62" height="1.45"/>
<rect x="1141.0" y="658.55" width="12.12" height="1.45"/>
<rect x="1129.0" y="680.55" width="5.38" height="1.45"/>
<rect x="1142.75" y="680.55" width="12.25" height="1.45"/>
<rect x="1156.25" y="680.55" width="13.75" height="1.45"/>
<rect x="1125.62" y="686.55" width="7.5" height="1.45"/>
<rect x="1126.25" y="696.55" width="3.12" height="1.45"/>
<rect x="1144.6" y="564.55" width="4.62" height="1.45"/>
<rect x="1140.9" y="670.55" width="4.62" height="1.45"/>
<rect x="1133.5" y="566.55" width="4.62" height="1.45"/>
<rect x="1141.83" y="566.55" width="12.02" height="1.45"/>
<rect x="1129.8" y="672.55" width="4.62" height="1.45"/>
<rect x="1138.12" y="672.55" width="12.03" height="1.45"/>
<rect x="1134.42" y="568.55" width="8.33" height="1.45"/>
<rect x="1172.35" y="568.55" width="4.62" height="1.45"/>
<rect x="1180.67" y="568.55" width="12.03" height="1.45"/>
<rect x="1130.72" y="674.55" width="8.33" height="1.45"/>
<rect x="1168.65" y="674.55" width="4.62" height="1.45"/>
<rect x="1176.97" y="674.55" width="12.03" height="1.45"/>
<rect x="1126.1" y="578.55" width="4.62" height="1.45"/>
<rect x="1204.72" y="612.55" width="12.03" height="1.45"/>
<rect x="1131.65" y="618.55" width="12.02" height="1.45"/>
<rect x="1126.1" y="624.55" width="4.62" height="1.45"/>
<rect x="1141.83" y="624.55" width="4.62" height="1.45"/>
<rect x="1126.1" y="626.55" width="4.62" height="1.45"/>
<rect x="1126.1" y="628.55" width="4.62" height="1.45"/>
<rect x="1129.8" y="632.55" width="12.03" height="1.45"/>
<rect x="1133.5" y="634.55" width="12.03" height="1.45"/>
<rect x="1168.65" y="634.55" width="12.02" height="1.45"/>
<rect x="1138.12" y="636.55" width="4.62" height="1.45"/>
<rect x="1154.78" y="636.55" width="12.02" height="1.45"/>
<rect x="1147.38" y="646.55" width="3.7" height="1.45"/>
<rect x="1147.38" y="648.55" width="12.03" height="1.45"/>
<rect x="1152.0" y="652.55" width="4.62" height="1.45"/>
<rect x="1158.47" y="654.55" width="4.62" height="1.45"/>
</g>
<g fill="#ae81ff" fill-opacity="0.75">
<rect x="1157.25" y="94.55" width="4.62" height="1.45"/>
<rect x="1166.88" y="140.55" width="1.88" height="1.45"/>
<rect x="1150.62" y="184.55" width="1.88" height="1.45"/>
<rect x="1149.0" y="188.55" width="2.0" height="1.45"/>
<rect x="1165.0" y="190.55" width="2.5" height="1.45"/>
<rect x="1138.12" y="196.55" width="3.75" height="1.45"/>
<rect x="1151.88" y="196.55" width="5.0" height="1.45"/>
<rect x="1136.25" y="210.55" width="3.75" height="1.45"/>
<rect x="1142.5" y="228.55" width="3.75" height="1.45"/>
<rect x="1129.0" y="238.55" width="4.12" height="1.45"/>
<rect x="1133.12" y="256.55" width="3.75" height="1.45"/>
<rect x="1144.5" y="282.55" width="4.25" height="1.45"/>
<rect x="1144.5" y="284.55" width="4.25" height="1.45"/>
<rect x="1136.25" y="310.55" width="3.75" height="1.45"/>
<rect x="1136.88" y="326.55" width="3.12" height="1.45"/>
<rect x="1129.0" y="340.55" width="4.12" height="1.45"/>
<rect x="1155.0" y="348.55" width="2.5" height="1.45"/>
<rect x="1133.12" y="360.55" width="3.75" height="1.45"/>
<rect x="1133.12" y="368.55" width="3.75" height="1.45"/>
<rect x="1136.88" y="388.55" width="3.12" height="1.45"/>
<rect x="1136.88" y="392.55" width="3.12" height="1.45"/>
<rect x="1133.12" y="398.55" width="3.75" height="1.45"/>
<rect x="1137.25" y="408.55" width="3.38" height="1.45"/>
<rect x="1144.5" y="428.55" width="4.25" height="1.45"/>
<rect x="1144.5" y="430.55" width="4.25" height="1.45"/>
<rect x="1136.25" y="456.55" width="3.75" height="1.45"/>
<rect x="1136.88" y="472.55" width="3.12" height="1.45"/>
<rect x="1129.0" y="484.55" width="4.12" height="1.45"/>
<rect x="1141.0" y="492.55" width="4.0" height="1.45"/>
<rect x="1186.25" y="508.55" width="1.25" height="1.45"/>
<rect x="1133.75" y="524.55" width="3.75" height="1.45"/>
<rect x="1141.88" y="554.55" width="3.75" height="1.45"/>
<rect x="1147.5" y="656.55" width="3.5" height="1.45"/>
<rect x="1144.6" y="576.55" width="3.7" height="1.45"/>
<rect x="1167.72" y="608.55" width="3.7" height="1.45"/>
<rect x="1145.53" y="632.55" width="3.7" height="1.45"/>
<rect x="1155.7" y="634.55" width="0.92" height="1.45"/>
<rect x="1180.67" y="638.55" width="0.92" height="1.45"/>
</g>
<g fill="#75715e" fill-opacity="0.68">
<rect x="1130.62" y="124.55" width="1.5" height="1.45"/>
<rect x="1130.62" y="126.55" width="1.5" height="1.45"/>
<rect x="1133.0" y="126.55" width="51.38" height="1.45"/>
<rect x="1130.62" y="128.55" width="1.5" height="1.45"/>
<rect x="1133.0" y="128.55" width="15.12" height="1.45"/>
<rect x="1130.62" y="130.55" width="1.5" height="1.45"/>
<rect x="1153.75" y="188.55" width="30.62" height="1.45"/>
<rect x="1162.5" y="246.55" width="46.25" height="1.45"/>
<rect x="1122.5" y="250.55" width="26.88" height="1.45"/>
<rect x="1175.62" y="268.55" width="21.25" height="1.45"/>
<rect x="1122.5" y="354.55" width="26.88" height="1.45"/>
<rect x="1122.5" y="498.55" width="1.5" height="1.45"/>
<rect x="1122.5" y="500.55" width="1.5" height="1.45"/>
<rect x="1125.0" y="500.55" width="15.62" height="1.45"/>
<rect x="1122.5" y="502.55" width="1.5" height="1.45"/>
<rect x="1126.25" y="532.55" width="1.5" height="1.45"/>
<rect x="1126.25" y="534.55" width="1.5" height="1.45"/>
<rect x="1128.75" y="534.55" width="17.5" height="1.45"/>
<rect x="1126.25" y="536.55" width="1.5" height="1.45"/>
<rect x="1128.75" y="536.55" width="16.25" height="1.45"/>
<rect x="1126.25" y="538.55" width="1.5" height="1.45"/>
<rect x="1157.55" y="566.55" width="1.85" height="1.45"/>
<rect x="1160.33" y="566.55" width="8.33" height="1.45"/>
<rect x="1169.58" y="566.55" width="2.77" height="1.45"/>
<rect x="1173.28" y="566.55" width="4.62" height="1.45"/>
<rect x="1178.83" y="566.55" width="1.85" height="1.45"/>
<rect x="1181.6" y="566.55" width="4.62" height="1.45"/>
<rect x="1187.15" y="566.55" width="2.77" height="1.45"/>
<rect x="1190.85" y="566.55" width="6.48" height="1.45"/>
<rect x="1194.55" y="568.55" width="1.85" height="1.45"/>
<rect x="1197.33" y="568.55" width="8.33" height="1.45"/>
<rect x="1206.58" y="568.55" width="2.77" height="1.45"/>
<rect x="1210.28" y="568.55" width="4.62" height="1.45"/>
<rect x="1215.83" y="568.55" width="1.85" height="1.45"/>
<rect x="1218.6" y="568.55" width="3.7" height="1.45"/>
<rect x="1223.22" y="568.55" width="0.93" height="1.45"/>
<rect x="1225.08" y="568.55" width="5.55" height="1.45"/>
<rect x="1231.55" y="568.55" width="8.33" height="1.45"/>
<rect x="1190.85" y="674.55" width="1.85" height="1.45"/>
<rect x="1193.62" y="674.55" width="8.33" height="1.45"/>
<rect x="1202.88" y="674.55" width="2.78" height="1.45"/>
<rect x="1206.58" y="674.55" width="4.62" height="1.45"/>
<rect x="1212.12" y="674.55" width="1.85" height="1.45"/>
<rect x="1214.9" y="674.55" width="3.7" height="1.45"/>
<rect x="1219.53" y="674.55" width="0.92" height="1.45"/>
<rect x="1221.38" y="674.55" width="5.55" height="1.45"/>
<rect x="1227.85" y="674.55" width="8.33" height="1.45"/>
<rect x="1126.1" y="588.55" width="1.85" height="1.45"/>
<rect x="1126.1" y="590.55" width="1.85" height="1.45"/>
<rect x="1128.88" y="590.55" width="5.55" height="1.45"/>
<rect x="1135.35" y="590.55" width="25.9" height="1.45"/>
<rect x="1126.1" y="592.55" width="1.85" height="1.45"/>
<rect x="1128.88" y="592.55" width="3.7" height="1.45"/>
<rect x="1133.5" y="592.55" width="2.78" height="1.45"/>
<rect x="1137.2" y="592.55" width="2.77" height="1.45"/>
<rect x="1140.9" y="592.55" width="1.85" height="1.45"/>
<rect x="1143.67" y="592.55" width="0.92" height="1.45"/>
<rect x="1145.53" y="592.55" width="7.4" height="1.45"/>
<rect x="1153.85" y="592.55" width="4.62" height="1.45"/>
<rect x="1159.4" y="592.55" width="1.85" height="1.45"/>
<rect x="1162.17" y="592.55" width="3.7" height="1.45"/>
<rect x="1166.8" y="592.55" width="2.78" height="1.45"/>
<rect x="1170.5" y="592.55" width="12.03" height="1.45"/>
<rect x="1183.45" y="592.55" width="1.85" height="1.45"/>
<rect x="1186.22" y="592.55" width="6.48" height="1.45"/>
<rect x="1126.1" y="594.55" width="1.85" height="1.45"/>
<rect x="1128.88" y="594.55" width="3.7" height="1.45"/>
<rect x="1133.5" y="594.55" width="6.47" height="1.45"/>
<rect x="1140.9" y="594.55" width="5.55" height="1.45"/>
<rect x="1147.38" y="594.55" width="3.7" height="1.45"/>
<rect x="1152.0" y="594.55" width="2.78" height="1.45"/>
<rect x="1155.7" y="594.55" width="3.7" height="1.45"/>
<rect x="1160.33" y="594.55" width="3.7" height="1.45"/>
<rect x="1164.95" y="594.55" width="6.47" height="1.45"/>
<rect x="1172.35" y="594.55" width="6.48" height="1.45"/>
<rect x="1179.75" y="594.55" width="1.85" height="1.45"/>
<rect x="1182.53" y="594.55" width="2.77" height="1.45"/>
<rect x="1186.22" y="594.55" width="0.93" height="1.45"/>
<rect x="1188.08" y="594.55" width="8.33" height="1.45"/>
<rect x="1197.33" y="594.55" width="3.7" height="1.45"/>
<rect x="1201.95" y="594.55" width="1.85" height="1.45"/>
<rect x="1204.72" y="594.55" width="4.62" height="1.45"/>
<rect x="1126.1" y="596.55" width="1.85" height="1.45"/>
<rect x="1128.88" y="596.55" width="7.4" height="1.45"/>
<rect x="1137.2" y="596.55" width="64.75" height="1.45"/>
<rect x="1126.1" y="598.55" width="1.85" height="1.45"/>
<rect x="1126.1" y="600.55" width="1.85" height="1.45"/>
<rect x="1128.88" y="600.55" width="2.78" height="1.45"/>
<rect x="1132.58" y="600.55" width="13.88" height="1.45"/>
<rect x="1147.38" y="600.55" width="0.92" height="1.45"/>
<rect x="1149.22" y="600.55" width="9.25" height="1.45"/>
<rect x="1159.4" y="600.55" width="1.85" height="1.45"/>
<rect x="1162.17" y="600.55" width="4.62" height="1.45"/>
<rect x="1126.1" y="602.55" width="1.85" height="1.45"/>
<rect x="1132.58" y="602.55" width="0.92" height="1.45"/>
<rect x="1134.42" y="602.55" width="16.65" height="1.45"/>
<rect x="1126.1" y="604.55" width="1.85" height="1.45"/>
<rect x="1132.58" y="604.55" width="0.92" height="1.45"/>
<rect x="1134.42" y="604.55" width="37.0" height="1.45"/>
</g>
<g fill="#e6db74" fill-opacity="0.68">
<rect x="1136.0" y="122.55" width="43.38" height="1.45"/>
<rect x="1177.25" y="294.55" width="4.62" height="1.45"/>
<rect x="1177.25" y="440.55" width="4.62" height="1.45"/>
<rect x="1144.38" y="542.55" width="5.62" height="1.45"/>
</g>
<g fill="#a6e22e" fill-opacity="0.75">
<rect x="1133.12" y="182.55" width="11.88" height="1.45"/>
<rect x="1133.12" y="244.55" width="14.38" height="1.45"/>
<rect x="1133.12" y="346.55" width="16.25" height="1.45"/>
<rect x="1133.12" y="490.55" width="10.62" height="1.45"/>
<rect x="1133.75" y="686.55" width="13.12" height="1.45"/>
</g>
<g fill="#fd971f" fill-opacity="0.68">
<rect x="1146.0" y="182.55" width="9.62" height="1.45"/>
<rect x="1157.5" y="182.55" width="4.38" height="1.45"/>
<rect x="1164.38" y="182.55" width="9.38" height="1.45"/>
<rect x="1148.5" y="244.55" width="10.25" height="1.45"/>
<rect x="1160.25" y="244.55" width="4.12" height="1.45"/>
<rect x="1166.88" y="244.55" width="13.12" height="1.45"/>
<rect x="1150.38" y="346.55" width="5.25" height="1.45"/>
<rect x="1157.25" y="346.55" width="4.0" height="1.45"/>
<rect x="1163.12" y="346.55" width="2.5" height="1.45"/>
<rect x="1166.88" y="346.55" width="1.88" height="1.45"/>
<rect x="1170.62" y="346.55" width="2.5" height="1.45"/>
<rect x="1175.0" y="346.55" width="11.25" height="1.45"/>
<rect x="1144.75" y="490.55" width="5.25" height="1.45"/>
<rect x="1151.5" y="490.55" width="3.25" height="1.45"/>
<rect x="1157.5" y="490.55" width="2.5" height="1.45"/>
<rect x="1161.25" y="490.55" width="2.5" height="1.45"/>
<rect x="1165.25" y="490.55" width="6.0" height="1.45"/>
<rect x="1175.0" y="490.55" width="10.0" height="1.45"/>
<rect x="1186.5" y="490.55" width="2.88" height="1.45"/>
<rect x="1191.25" y="490.55" width="8.12" height="1.45"/>
<rect x="1200.62" y="490.55" width="6.25" height="1.45"/>
<rect x="1208.75" y="490.55" width="16.25" height="1.45"/>
<rect x="1226.88" y="490.55" width="9.38" height="1.45"/>
<rect x="1147.88" y="686.55" width="7.75" height="1.45"/>
<rect x="1157.5" y="686.55" width="4.38" height="1.45"/>
<rect x="1165.62" y="686.55" width="24.38" height="1.45"/>
</g>
<g fill="#ae81ff" fill-opacity="1.0">
<rect x="1134.42" y="564" width="2.78" height="2"/>
<rect x="1130.72" y="670" width="2.78" height="2"/>
</g>
</g>
</svg><div id="status"></div>
<div class="st" style="left:36.5px;letter-spacing:0.38px">3 lines, 164 characters selected</div>
<div class="st" style="left:1000px;letter-spacing:0px">UTF-8</div>
<div class="st" style="left:1087.5px;letter-spacing:0.1px">Tab Size: 4</div>
<div class="st" style="left:1176px">ActionScript 2.0</div>
<svg width="1280" height="720" viewBox="0 0 1280 720">
<!-- caret -->
<rect x="60" y="437" width="2" height="21" fill="#f8f8f0"/>
<!-- tab flares -->
<path d="M38 88 Q42 88 42 84 L42 88 Z" fill="#272822"/>
<path d="M216 88 Q212 88 212 84 L212 88 Z" fill="#272822"/>
<!-- tab history arrows -->
<path d="M18 67 L18 77 L10 72 Z" fill="#aeafa9"/>
<path d="M24 67 L24 77 L32 72 Z" fill="#aeafa9"/>
<!-- tab close -->
<path d="M193.7 70.2 L199.8 76.8 M199.8 70.2 L193.7 76.8" stroke="#9c9d97" stroke-width="1.5" fill="none"/>
<!-- new tab + and dropdown -->
<path d="M1241 71 H1245 V67 H1247 V71 H1251 V73 H1247 V77 H1245 V73 H1241 Z" fill="#8a8b84"/>
<path d="M1260 68 L1270 68 L1265 76 Z" fill="#b9b9b4"/>
<!-- window controls -->
<rect x="1193" y="13" width="6" height="2" fill="#adadb0"/>
<path d="M1226.5 11 L1231 11 L1231 15.5 Z M1225 12.5 L1225 17 L1229.5 17 Z" fill="#adadb0"/>
<circle cx="1260" cy="14" r="7.2" fill="#9bbd73"/>
<path d="M1257.3 11.3 L1262.7 16.7 M1262.7 11.3 L1257.3 16.7" stroke="#2d2d2d" stroke-width="1.5" fill="none"/>
<!-- status sidebar icon -->
<rect x="11.6" y="703.6" width="12.8" height="10.8" rx="1.8" ry="1.8" fill="#2a2c35" stroke="#8d8f95" stroke-width="1.2"/>
<path d="M16 703.2 H13 Q11.1 703.2 11.1 705 V713 Q11.1 714.8 13 714.8 H16 Z" fill="#8d8f95"/>
<rect x="0" y="719" width="1280" height="1" fill="#2f2f30"/>
<!-- scrollbar -->
<rect x="1269" y="94" width="7" height="600" rx="2" ry="2" fill="#3c3d37"/>
<rect x="1269" y="521" width="7" height="68" rx="3" ry="3" fill="#686963"/>
</svg>
</body>
</html>
